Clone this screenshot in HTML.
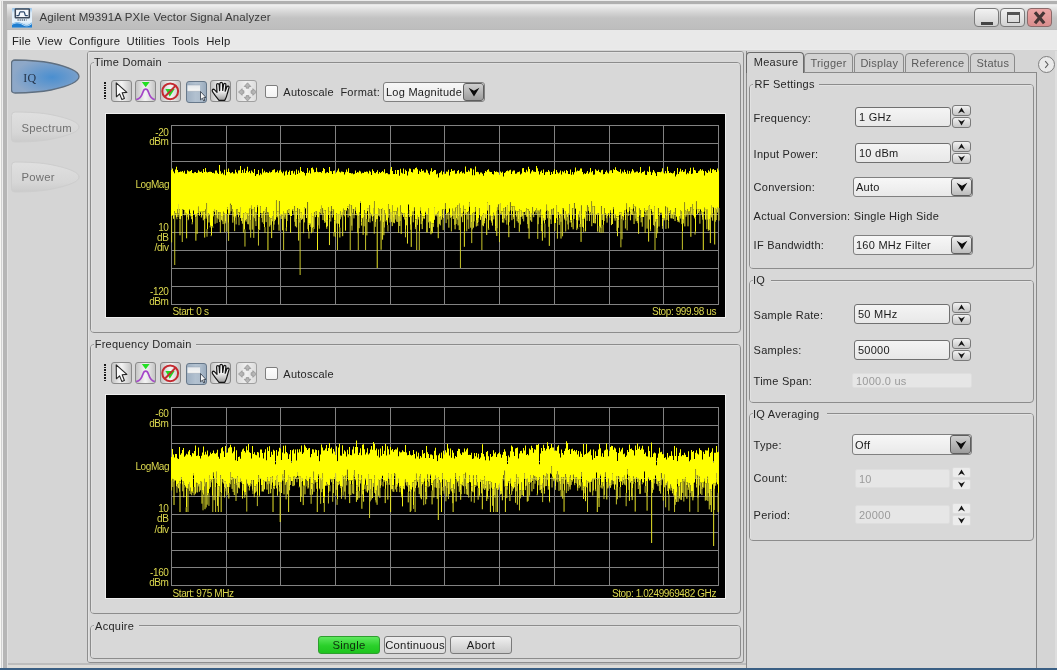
<!DOCTYPE html>
<html><head><meta charset="utf-8"><style>
html,body{margin:0;padding:0;width:1057px;height:670px;overflow:hidden;background:#d5d5d5}
body{position:relative;font-family:'Liberation Sans',sans-serif;}
div{font-family:'Liberation Sans',sans-serif}
</style></head><body><div style="position:absolute;left:0;top:0;width:1057px;height:670px;will-change:transform">
<div style="position:absolute;left:0px;top:0px;width:1057px;height:670px;box-sizing:border-box;background:#d5d5d5"></div>
<div style="position:absolute;left:0px;top:0px;width:1px;height:670px;box-sizing:border-box;background:#f6f6f3"></div>
<div style="position:absolute;left:1px;top:0px;width:1px;height:670px;box-sizing:border-box;background:#d0d0d0"></div>
<div style="position:absolute;left:2px;top:0px;width:1px;height:670px;box-sizing:border-box;background:#efefef"></div>
<div style="position:absolute;left:3px;top:0px;width:4px;height:670px;box-sizing:border-box;background:#b6b6b6"></div>
<div style="position:absolute;left:7px;top:0px;width:1px;height:670px;box-sizing:border-box;background:#e0e0e0"></div>
<div style="position:absolute;left:0px;top:0px;width:1057px;height:1px;box-sizing:border-box;background:#ececec"></div>
<div style="position:absolute;left:3px;top:1px;width:1054px;height:3px;box-sizing:border-box;background:#b0b0b0"></div>
<div style="position:absolute;left:7px;top:4px;width:1050px;height:1px;box-sizing:border-box;background:#e6e6e6"></div>
<div style="position:absolute;left:7px;top:5px;width:1050px;height:25px;box-sizing:border-box;background:linear-gradient(#f0f0f0 0px,#d6d6d6 7px,#c3c3c3 13px,#bdbdbd 24px,#b6b6b6 25px)"></div>
<svg style="position:absolute;left:11.5px;top:7.5px" width="20" height="20" viewBox="0 0 20 20">
<defs><linearGradient id="ig" x1="0" y1="0" x2="0" y2="1"><stop offset="0" stop-color="#8fc0ea"/><stop offset="0.25" stop-color="#dcecf8"/><stop offset="0.7" stop-color="#e6f2fb"/><stop offset="1" stop-color="#9ccbef"/></linearGradient></defs>
<rect x="0" y="0" width="20" height="19.5" rx="1" fill="url(#ig)"/>
<rect x="3.3" y="1" width="14" height="8.8" rx="0.6" fill="#f4f8fc" stroke="#3c4858" stroke-width="1.5"/>
<path d="M4.4 7.7 H6.6 C7.4 7.7 7.3 3.8 8.2 3.8 H12 C12.9 3.8 12.8 7.7 13.6 7.7 H15.8" fill="none" stroke="#2e4a6c" stroke-width="1.3"/>
<path d="M5.5 12 H14.5" stroke="#5a6878" stroke-width="1.4" stroke-dasharray="1.2 0.9"/>
<path d="M0 15.8 C4 13.4 7.5 13.8 11 16 C14 18 17 17.3 20 14.6 V19.5 H0 Z" fill="#1f7ed0"/>
<path d="M0 16.4 C4 14.1 7.5 14.5 11 16.7 C14 18.6 17 18 20 15.4" fill="none" stroke="#d6ecfb" stroke-width="0.9"/>
</svg>
<div style="position:absolute;left:39.50px;top:12.37px;font-size:11.5px;line-height:11.5px;color:#3a3a3a;white-space:nowrap;letter-spacing:0.1px;">Agilent M9391A PXIe Vector Signal Analyzer</div>
<div style="position:absolute;left:974px;top:8px;width:25px;height:19px;box-sizing:border-box;border:1px solid #7a7a7a;border-radius:4px;background:linear-gradient(#f2f2f2,#d2d2d2);overflow:hidden"><div style="position:absolute;left:6px;top:13px;width:12px;height:3px;background:#454545"></div></div>
<div style="position:absolute;left:1000px;top:8px;width:25px;height:19px;box-sizing:border-box;border:1px solid #7a7a7a;border-radius:4px;background:linear-gradient(#f2f2f2,#d2d2d2);overflow:hidden"><div style="position:absolute;left:6px;top:3px;width:13px;height:11px;box-sizing:border-box;border:1px solid #555;border-top:3px solid #555"></div></div>
<div style="position:absolute;left:1027px;top:8px;width:25px;height:19px;box-sizing:border-box;border:1px solid #8a6a6a;border-radius:4px;background:linear-gradient(#eca6a6,#d98d8d);overflow:hidden"><svg width="23" height="17" style="position:absolute;left:0;top:0"><path d="M7 3.2 L16.2 14.2 M16.2 3.2 L7 14.2" stroke="#463636" stroke-width="3.2"/></svg></div>
<div style="position:absolute;left:8px;top:30px;width:1049px;height:20px;box-sizing:border-box;background:#e9e9e9"></div>
<div style="position:absolute;left:8px;top:49px;width:1049px;height:1px;box-sizing:border-box;background:#ebebeb"></div>
<div style="position:absolute;left:11.90px;top:35.53px;font-size:11.3px;line-height:11.3px;color:#222;white-space:nowrap;letter-spacing:0.25px;">File</div>
<div style="position:absolute;left:37.10px;top:35.53px;font-size:11.3px;line-height:11.3px;color:#222;white-space:nowrap;letter-spacing:0.25px;">View</div>
<div style="position:absolute;left:69.00px;top:35.53px;font-size:11.3px;line-height:11.3px;color:#222;white-space:nowrap;letter-spacing:0.25px;">Configure</div>
<div style="position:absolute;left:126.50px;top:35.53px;font-size:11.3px;line-height:11.3px;color:#222;white-space:nowrap;letter-spacing:0.25px;">Utilities</div>
<div style="position:absolute;left:171.90px;top:35.53px;font-size:11.3px;line-height:11.3px;color:#222;white-space:nowrap;letter-spacing:0.25px;">Tools</div>
<div style="position:absolute;left:206.20px;top:35.53px;font-size:11.3px;line-height:11.3px;color:#222;white-space:nowrap;letter-spacing:0.25px;">Help</div>
<svg style="position:absolute;left:10.5px;top:59px" width="70" height="36" viewBox="0 0 70 36">
<defs><radialGradient id="iqg" cx="0.58" cy="0.52" r="0.62" gradientTransform="translate(0.29 0.26) scale(0.5 0.5) translate(-0.29 -0.26)"><stop offset="0" stop-color="#3d8bd2"/><stop offset="1" stop-color="#8cabd0"/></radialGradient>
<radialGradient id="iqg2" cx="0.6" cy="0.52" r="0.58"><stop offset="0" stop-color="#4a8fd0"/><stop offset="0.55" stop-color="#6f9ccc"/><stop offset="1" stop-color="#8ea8c8"/></radialGradient></defs>
<path d="M4 1 C20 1.20 30 2.00 40 4.00 C56 7.50 68 12.00 68 17.50 C68 23.00 56 27.50 40 31.00 C30 33.00 20 33.80 4 34.00 Q0.5 34.00 0.5 30.50 V4.5 Q0.5 1 4 1 Z" fill="url(#iqg2)" stroke="#5f6f80" stroke-width="1.3"/></svg>
<div style="position:absolute;left:23.20px;top:72.04px;font-size:12px;line-height:12px;color:#24344a;white-space:nowrap;letter-spacing:0.25px;font-family:'Liberation Serif',serif;">IQ</div>
<svg style="position:absolute;left:10.5px;top:111px" width="70" height="33" viewBox="0 0 70 33">
<defs><linearGradient id="sg111" x1="0" y1="0" x2="0" y2="1"><stop offset="0" stop-color="#e0e0e0"/><stop offset="0.7" stop-color="#d6d6d6"/><stop offset="1" stop-color="#cbcbcb"/></linearGradient></defs>
<path d="M4 1 C20 1.09 30 1.82 40 3.65 C56 6.84 68 10.94 68 15.96 C68 20.97 56 25.07 40 28.26 C30 30.09 20 30.82 4 31.00 Q0.5 31.00 0.5 27.81 V4.5 Q0.5 1 4 1 Z" fill="url(#sg111)" stroke="#cdcdcd" stroke-width="1"/></svg>
<svg style="position:absolute;left:10.5px;top:160.5px" width="70" height="33" viewBox="0 0 70 33">
<defs><linearGradient id="sg160" x1="0" y1="0" x2="0" y2="1"><stop offset="0" stop-color="#e0e0e0"/><stop offset="0.7" stop-color="#d6d6d6"/><stop offset="1" stop-color="#cbcbcb"/></linearGradient></defs>
<path d="M4 1 C20 1.09 30 1.82 40 3.65 C56 6.84 68 10.94 68 15.96 C68 20.97 56 25.07 40 28.26 C30 30.09 20 30.82 4 31.00 Q0.5 31.00 0.5 27.81 V4.5 Q0.5 1 4 1 Z" fill="url(#sg160)" stroke="#cdcdcd" stroke-width="1"/></svg>
<div style="position:absolute;left:21.50px;top:122.83px;font-size:11.3px;line-height:11.3px;color:#707070;white-space:nowrap;letter-spacing:0.25px;">Spectrum</div>
<div style="position:absolute;left:21.50px;top:171.83px;font-size:11.3px;line-height:11.3px;color:#707070;white-space:nowrap;letter-spacing:0.25px;">Power</div>
<div style="position:absolute;left:87px;top:51px;width:657px;height:612px;box-sizing:border-box;border:1px solid #8e8e8e;border-radius:3px;background:#d8d8d8"></div>
<div style="position:absolute;left:88px;top:52px;width:655px;height:610px;box-sizing:border-box;border-left:1px solid #e2e2e2;border-top:1px solid #e2e2e2;border-radius:2px"></div>
<div style="position:absolute;left:90px;top:62px;width:651px;height:271px;box-sizing:border-box;border:1px solid #8c8c8c;border-radius:4px;"></div><div style="position:absolute;left:91px;top:63px;width:649px;height:269px;box-sizing:border-box;border:1px solid #e0e0e0;border-right:none;border-bottom:none;border-radius:3px;"></div><div style="position:absolute;left:94px;top:60px;width:74px;height:5px;background:#d8d8d8"></div><div style="position:absolute;left:94.10px;top:57.09px;font-size:11px;line-height:11px;color:#262626;white-space:nowrap;letter-spacing:0.25px;">Time Domain</div>
<div style="position:absolute;left:90px;top:344px;width:651px;height:270px;box-sizing:border-box;border:1px solid #8c8c8c;border-radius:4px;"></div><div style="position:absolute;left:91px;top:345px;width:649px;height:268px;box-sizing:border-box;border:1px solid #e0e0e0;border-right:none;border-bottom:none;border-radius:3px;"></div><div style="position:absolute;left:94px;top:342px;width:102px;height:5px;background:#d8d8d8"></div><div style="position:absolute;left:94.70px;top:338.79px;font-size:11px;line-height:11px;color:#262626;white-space:nowrap;letter-spacing:0.25px;">Frequency Domain</div>
<div style="position:absolute;left:90px;top:625px;width:651px;height:34px;box-sizing:border-box;border:1px solid #8c8c8c;border-radius:4px;"></div><div style="position:absolute;left:91px;top:626px;width:649px;height:32px;box-sizing:border-box;border:1px solid #e0e0e0;border-right:none;border-bottom:none;border-radius:3px;"></div><div style="position:absolute;left:94px;top:623px;width:45px;height:5px;background:#d8d8d8"></div><div style="position:absolute;left:95.10px;top:620.69px;font-size:11px;line-height:11px;color:#262626;white-space:nowrap;letter-spacing:0.25px;">Acquire</div>
<div style="position:absolute;left:103.5px;top:82.0px;width:2px;height:1.6px;box-sizing:border-box;background:#1a1a1a"></div><div style="position:absolute;left:103.5px;top:84.6px;width:2px;height:1.6px;box-sizing:border-box;background:#1a1a1a"></div><div style="position:absolute;left:103.5px;top:87.2px;width:2px;height:1.6px;box-sizing:border-box;background:#1a1a1a"></div><div style="position:absolute;left:103.5px;top:89.8px;width:2px;height:1.6px;box-sizing:border-box;background:#1a1a1a"></div><div style="position:absolute;left:103.5px;top:92.4px;width:2px;height:1.6px;box-sizing:border-box;background:#1a1a1a"></div><div style="position:absolute;left:103.5px;top:95.0px;width:2px;height:1.6px;box-sizing:border-box;background:#1a1a1a"></div><div style="position:absolute;left:103.5px;top:97.6px;width:2px;height:1.6px;box-sizing:border-box;background:#1a1a1a"></div><div style="position:absolute;left:111px;top:80px;width:21px;height:22px;box-sizing:border-box;border:1px solid #8a8a8a;border-radius:3px;background:linear-gradient(90deg,#c4c4c4,#f4f4f4 48%,#f0f0f0 55%,#c4c4c4);overflow:hidden"><svg width="21" height="22" style="position:absolute;left:-1px;top:-1px"><path d="M5.2 2.8 L5.4 16.8 L8.6 13.9 L10.9 19.6 L13.4 18.5 L11.2 12.8 L15.9 12.4 Z" fill="#fafafa" stroke="#262626" stroke-width="1.1" stroke-linejoin="round"/></svg></div><div style="position:absolute;left:135px;top:80px;width:21px;height:22px;box-sizing:border-box;border:1px solid #8a8a8a;border-radius:3px;background:linear-gradient(90deg,#c4c4c4,#f4f4f4 48%,#f0f0f0 55%,#c4c4c4);overflow:hidden"><svg width="21" height="22" style="position:absolute;left:-1px;top:-1px"><path d="M6.8 2 H14.6 L10.7 7.2 Z" fill="#22e022"/><path d="M1 19.5 C5 19.5 6.5 16.5 8 12 C9.2 8.2 12.2 8.2 13.4 12 C14.9 16.5 16.4 19.5 20 19.5" fill="none" stroke="#a444c8" stroke-width="1.7"/></svg></div><div style="position:absolute;left:160px;top:80px;width:21px;height:22px;box-sizing:border-box;border:1px solid #8a8a8a;border-radius:3px;background:linear-gradient(90deg,#c4c4c4,#f4f4f4 48%,#f0f0f0 55%,#c4c4c4);overflow:hidden"><svg width="21" height="22" style="position:absolute;left:-1px;top:-1px"><path d="M5.4 9 H14.6 L9.8 16.8 Z" fill="#22d822"/><circle cx="10.2" cy="11.3" r="7.9" fill="none" stroke="#c42a30" stroke-width="2"/><path d="M4.6 17 L15.9 5.4" stroke="#c42a30" stroke-width="1.9"/></svg></div><div style="position:absolute;left:186px;top:81px;width:21px;height:22px;box-sizing:border-box;border:1px solid #67788a;border-radius:3px;background:linear-gradient(90deg,#9fb0c2,#b2c1d0 45%,#aebdcc 70%,#9aabbd);overflow:hidden"><svg width="21" height="22" style="position:absolute;left:0;top:0"><defs><linearGradient id="zg" x1="0" y1="0" x2="0" y2="1"><stop offset="0" stop-color="#e4e8ec"/><stop offset="1" stop-color="#f6f6f4"/></linearGradient></defs><rect x="0.5" y="3" width="12.5" height="6.3" fill="url(#zg)"/><path d="M0.5 3 H13 M0.5 9.3 H13" stroke="#8a98a8" stroke-width="0.8" stroke-dasharray="1 1"/><path d="M13.5 9.5 L13.5 17.8 L15.4 16.2 L16.7 18.9 L17.9 18.3 L16.7 15.6 L19 15.5 Z" fill="#f4f4f4" stroke="#2a3440" stroke-width="0.8"/></svg></div><div style="position:absolute;left:210px;top:80px;width:21px;height:22px;box-sizing:border-box;border:1px solid #8a8a8a;border-radius:3px;background:linear-gradient(90deg,#c4c4c4,#f4f4f4 48%,#f0f0f0 55%,#c4c4c4);overflow:hidden"><svg width="21" height="22" style="position:absolute;left:-1px;top:-1px"><defs><linearGradient id="hg" x1="0" y1="0" x2="0" y2="1"><stop offset="0" stop-color="#fff"/><stop offset="0.5" stop-color="#f0f0f0"/><stop offset="1" stop-color="#9c9c9c"/></linearGradient></defs><path d="M9 20.3 C7 18 4.5 15 2.6 11.8 C1.6 10.2 2.8 8.6 4.4 9.6 L7 12.4 L6.6 5 C6.6 3 9 3 9.2 5 L9.6 10.6 L9.9 3.6 C10 1.8 12.4 1.8 12.5 3.6 L12.7 10.4 L13.6 4.6 C13.9 2.9 16.1 3.1 15.9 4.9 L15.2 11.2 L16.8 7 C17.4 5.6 19.4 6 19 7.6 L17.2 14 C16.6 17 15.6 18.8 14.8 20.3 Z" fill="url(#hg)" stroke="#161616" stroke-width="1.25" stroke-linejoin="round"/></svg></div><div style="position:absolute;left:236px;top:80px;width:21px;height:22px;box-sizing:border-box;border:1px solid #a0a0a0;border-radius:3px;background:linear-gradient(90deg,#dcdcdc,#f0f0f0 50%,#dcdcdc);overflow:hidden"><svg width="21" height="22" style="position:absolute;left:0;top:0"><g fill="#b6b6b6" stroke="#8e8e8e" stroke-width="0.7"><path d="M10.5 1.8 L13.8 5.5 H11.8 V7.2 H9.2 V5.5 H7.2 Z"/><path d="M10.5 20 L13.8 16.3 H11.8 V14.6 H9.2 V16.3 H7.2 Z"/><path d="M1.5 11 L5.2 7.7 V9.7 H6.9 V12.3 H5.2 V14.3 Z"/><path d="M19.5 11 L15.8 7.7 V9.7 H14.1 V12.3 H15.8 V14.3 Z"/></g></svg></div><div style="position:absolute;left:265px;top:85px;width:13px;height:13px;box-sizing:border-box;border:1px solid #7e7e7e;border-radius:2px;background:linear-gradient(#fdfdfd,#f2f2f2)"></div><div style="position:absolute;left:283.30px;top:87.39px;font-size:11px;line-height:11px;color:#262626;white-space:nowrap;letter-spacing:0.25px;">Autoscale</div><div style="position:absolute;left:340.40px;top:87.39px;font-size:11px;line-height:11px;color:#262626;white-space:nowrap;letter-spacing:0.25px;">Format:</div><div style="position:absolute;left:383px;top:82px;width:102px;height:20px;box-sizing:border-box;border:1px solid #808080;border-radius:3px;background:linear-gradient(#f7f7f7,#e9e9e9);overflow:hidden"><div style="position:absolute;right:0;top:0;width:21px;height:18px;box-sizing:border-box;border:1px solid #5e5e5e;border-radius:3px;background:linear-gradient(#cfcfcf,#9c9c9c);display:flex;align-items:center;justify-content:center"><svg width="12" height="10" viewBox="0 0 12 10" style="flex:none"><path d="M0.6 0.8 L6 9.6 L11.4 0.8 L6 3.8 Z" fill="#0c0c0c"/></svg></div></div><div style="position:absolute;left:386.00px;top:87.39px;font-size:11px;line-height:11px;color:#1a1a1a;white-space:nowrap;letter-spacing:0.25px;">Log Magnitude</div>
<div style="position:absolute;left:103.5px;top:364.0px;width:2px;height:1.6px;box-sizing:border-box;background:#1a1a1a"></div><div style="position:absolute;left:103.5px;top:366.6px;width:2px;height:1.6px;box-sizing:border-box;background:#1a1a1a"></div><div style="position:absolute;left:103.5px;top:369.2px;width:2px;height:1.6px;box-sizing:border-box;background:#1a1a1a"></div><div style="position:absolute;left:103.5px;top:371.8px;width:2px;height:1.6px;box-sizing:border-box;background:#1a1a1a"></div><div style="position:absolute;left:103.5px;top:374.4px;width:2px;height:1.6px;box-sizing:border-box;background:#1a1a1a"></div><div style="position:absolute;left:103.5px;top:377.0px;width:2px;height:1.6px;box-sizing:border-box;background:#1a1a1a"></div><div style="position:absolute;left:103.5px;top:379.6px;width:2px;height:1.6px;box-sizing:border-box;background:#1a1a1a"></div><div style="position:absolute;left:111px;top:362px;width:21px;height:22px;box-sizing:border-box;border:1px solid #8a8a8a;border-radius:3px;background:linear-gradient(90deg,#c4c4c4,#f4f4f4 48%,#f0f0f0 55%,#c4c4c4);overflow:hidden"><svg width="21" height="22" style="position:absolute;left:-1px;top:-1px"><path d="M5.2 2.8 L5.4 16.8 L8.6 13.9 L10.9 19.6 L13.4 18.5 L11.2 12.8 L15.9 12.4 Z" fill="#fafafa" stroke="#262626" stroke-width="1.1" stroke-linejoin="round"/></svg></div><div style="position:absolute;left:135px;top:362px;width:21px;height:22px;box-sizing:border-box;border:1px solid #8a8a8a;border-radius:3px;background:linear-gradient(90deg,#c4c4c4,#f4f4f4 48%,#f0f0f0 55%,#c4c4c4);overflow:hidden"><svg width="21" height="22" style="position:absolute;left:-1px;top:-1px"><path d="M6.8 2 H14.6 L10.7 7.2 Z" fill="#22e022"/><path d="M1 19.5 C5 19.5 6.5 16.5 8 12 C9.2 8.2 12.2 8.2 13.4 12 C14.9 16.5 16.4 19.5 20 19.5" fill="none" stroke="#a444c8" stroke-width="1.7"/></svg></div><div style="position:absolute;left:160px;top:362px;width:21px;height:22px;box-sizing:border-box;border:1px solid #8a8a8a;border-radius:3px;background:linear-gradient(90deg,#c4c4c4,#f4f4f4 48%,#f0f0f0 55%,#c4c4c4);overflow:hidden"><svg width="21" height="22" style="position:absolute;left:-1px;top:-1px"><path d="M5.4 9 H14.6 L9.8 16.8 Z" fill="#22d822"/><circle cx="10.2" cy="11.3" r="7.9" fill="none" stroke="#c42a30" stroke-width="2"/><path d="M4.6 17 L15.9 5.4" stroke="#c42a30" stroke-width="1.9"/></svg></div><div style="position:absolute;left:186px;top:363px;width:21px;height:22px;box-sizing:border-box;border:1px solid #67788a;border-radius:3px;background:linear-gradient(90deg,#9fb0c2,#b2c1d0 45%,#aebdcc 70%,#9aabbd);overflow:hidden"><svg width="21" height="22" style="position:absolute;left:0;top:0"><defs><linearGradient id="zg" x1="0" y1="0" x2="0" y2="1"><stop offset="0" stop-color="#e4e8ec"/><stop offset="1" stop-color="#f6f6f4"/></linearGradient></defs><rect x="0.5" y="3" width="12.5" height="6.3" fill="url(#zg)"/><path d="M0.5 3 H13 M0.5 9.3 H13" stroke="#8a98a8" stroke-width="0.8" stroke-dasharray="1 1"/><path d="M13.5 9.5 L13.5 17.8 L15.4 16.2 L16.7 18.9 L17.9 18.3 L16.7 15.6 L19 15.5 Z" fill="#f4f4f4" stroke="#2a3440" stroke-width="0.8"/></svg></div><div style="position:absolute;left:210px;top:362px;width:21px;height:22px;box-sizing:border-box;border:1px solid #8a8a8a;border-radius:3px;background:linear-gradient(90deg,#c4c4c4,#f4f4f4 48%,#f0f0f0 55%,#c4c4c4);overflow:hidden"><svg width="21" height="22" style="position:absolute;left:-1px;top:-1px"><defs><linearGradient id="hg" x1="0" y1="0" x2="0" y2="1"><stop offset="0" stop-color="#fff"/><stop offset="0.5" stop-color="#f0f0f0"/><stop offset="1" stop-color="#9c9c9c"/></linearGradient></defs><path d="M9 20.3 C7 18 4.5 15 2.6 11.8 C1.6 10.2 2.8 8.6 4.4 9.6 L7 12.4 L6.6 5 C6.6 3 9 3 9.2 5 L9.6 10.6 L9.9 3.6 C10 1.8 12.4 1.8 12.5 3.6 L12.7 10.4 L13.6 4.6 C13.9 2.9 16.1 3.1 15.9 4.9 L15.2 11.2 L16.8 7 C17.4 5.6 19.4 6 19 7.6 L17.2 14 C16.6 17 15.6 18.8 14.8 20.3 Z" fill="url(#hg)" stroke="#161616" stroke-width="1.25" stroke-linejoin="round"/></svg></div><div style="position:absolute;left:236px;top:362px;width:21px;height:22px;box-sizing:border-box;border:1px solid #a0a0a0;border-radius:3px;background:linear-gradient(90deg,#dcdcdc,#f0f0f0 50%,#dcdcdc);overflow:hidden"><svg width="21" height="22" style="position:absolute;left:0;top:0"><g fill="#b6b6b6" stroke="#8e8e8e" stroke-width="0.7"><path d="M10.5 1.8 L13.8 5.5 H11.8 V7.2 H9.2 V5.5 H7.2 Z"/><path d="M10.5 20 L13.8 16.3 H11.8 V14.6 H9.2 V16.3 H7.2 Z"/><path d="M1.5 11 L5.2 7.7 V9.7 H6.9 V12.3 H5.2 V14.3 Z"/><path d="M19.5 11 L15.8 7.7 V9.7 H14.1 V12.3 H15.8 V14.3 Z"/></g></svg></div><div style="position:absolute;left:265px;top:367px;width:13px;height:13px;box-sizing:border-box;border:1px solid #7e7e7e;border-radius:2px;background:linear-gradient(#fdfdfd,#f2f2f2)"></div><div style="position:absolute;left:283.30px;top:369.39px;font-size:11px;line-height:11px;color:#262626;white-space:nowrap;letter-spacing:0.25px;">Autoscale</div>
<div style="position:absolute;left:105px;top:113px;width:621px;height:205px;background:#eeeeee"></div><svg style="position:absolute;left:106px;top:114px" width="619" height="203" viewBox="106 114 619 203"><rect x="106" y="114" width="619" height="203" fill="#000"/><path d="M171.5 125 V305 M171 125.5 H719 M226.5 125 V305 M171 143.5 H719 M280.5 125 V305 M171 161.5 H719 M335.5 125 V305 M171 179.5 H719 M390.5 125 V305 M171 197.5 H719 M444.5 125 V305 M171 214.5 H719 M499.5 125 V305 M171 232.5 H719 M554.5 125 V305 M171 250.5 H719 M609.5 125 V305 M171 268.5 H719 M663.5 125 V305 M171 286.5 H719 M718.5 125 V305 M171 304.5 H719" stroke="#828282" stroke-width="1" fill="none"/><path d="M171.5 170.0V216.6M172.5 168.5V215.2M173.5 171.5V215.2M174.5 173.3V211.6M175.5 169.6V213.3M176.5 166.8V213.3M177.5 170.0V209.0M178.5 172.3V203.9M179.5 172.0V209.6M180.5 171.5V215.9M181.5 171.7V215.9M182.5 170.9V209.3M183.5 172.5V209.8M184.5 170.7V210.1M185.5 173.8V212.7M186.5 173.7V213.2M187.5 170.3V214.6M188.5 171.2V214.6M189.5 171.4V209.5M190.5 171.1V213.2M191.5 170.0V216.2M192.5 173.0V216.2M193.5 173.3V209.9M194.5 172.3V214.2M195.5 172.1V214.5M196.5 172.9V214.5M197.5 172.8V213.3M198.5 170.2V206.8M199.5 171.4V211.7M200.5 171.9V211.7M201.5 171.5V211.7M202.5 173.1V211.7M203.5 169.0V211.6M204.5 171.9V211.6M205.5 167.9V209.4M206.5 171.8V202.9M207.5 172.6V212.9M208.5 171.9V212.9M209.5 171.8V214.6M210.5 171.7V225.7M211.5 172.0V226.5M212.5 172.9V226.5M213.5 172.7V211.6M214.5 173.4V208.9M215.5 170.4V210.0M216.5 170.6V210.0M217.5 172.7V211.9M218.5 174.0V211.9M219.5 165.1V212.2M220.5 171.2V212.4M221.5 173.7V216.8M222.5 172.7V216.8M223.5 174.5V211.8M224.5 169.8V213.0M225.5 175.2V214.0M226.5 169.6V214.0M227.5 171.9V207.3M228.5 168.5V213.4M229.5 172.0V213.4M230.5 173.2V203.8M231.5 172.7V205.0M232.5 172.0V209.2M233.5 173.5V211.9M234.5 173.4V216.0M235.5 169.8V216.0M236.5 172.2V209.6M237.5 173.5V209.3M238.5 170.6V212.6M239.5 170.3V212.6M240.5 166.1V207.0M241.5 173.0V217.9M242.5 169.9V217.9M243.5 172.7V213.1M244.5 168.8V213.1M245.5 173.0V212.3M246.5 170.8V213.8M247.5 166.8V213.8M248.5 172.2V213.8M249.5 170.9V208.8M250.5 173.2V208.8M251.5 170.5V205.8M252.5 171.8V209.4M253.5 172.9V209.4M254.5 169.1V207.6M255.5 175.9V212.5M256.5 174.2V212.5M257.5 173.9V205.0M258.5 169.9V217.1M259.5 175.3V217.1M260.5 173.2V206.3M261.5 174.4V213.6M262.5 168.8V213.6M263.5 172.6V211.5M264.5 170.7V211.5M265.5 172.4V209.2M266.5 171.9V207.3M267.5 172.5V212.0M268.5 173.1V212.3M269.5 171.6V217.1M270.5 172.5V218.6M271.5 171.9V218.6M272.5 170.2V216.0M273.5 169.7V211.1M274.5 169.3V219.1M275.5 172.5V219.1M276.5 172.0V200.6M277.5 170.6V211.3M278.5 172.8V211.3M279.5 170.4V200.9M280.5 169.7V213.9M281.5 171.7V213.9M282.5 173.2V213.9M283.5 171.5V211.8M284.5 175.6V213.7M285.5 171.4V213.7M286.5 170.5V213.7M287.5 174.8V210.2M288.5 172.0V209.5M289.5 170.6V209.4M290.5 175.1V215.9M291.5 171.1V215.9M292.5 170.7V209.1M293.5 173.4V209.1M294.5 171.3V206.1M295.5 174.8V211.5M296.5 169.5V211.5M297.5 174.1V208.0M298.5 170.5V209.0M299.5 172.8V209.0M300.5 166.9V212.5M301.5 170.9V212.5M302.5 172.1V214.9M303.5 171.7V214.9M304.5 173.1V207.2M305.5 175.4V208.0M306.5 173.1V208.0M307.5 168.0V202.0M308.5 172.7V223.4M309.5 170.5V223.4M310.5 173.4V223.4M311.5 168.0V213.7M312.5 167.5V216.8M313.5 169.6V216.8M314.5 172.2V212.2M315.5 172.0V211.2M316.5 167.8V211.2M317.5 171.8V217.4M318.5 172.2V217.4M319.5 171.9V211.9M320.5 172.1V209.1M321.5 172.8V205.7M322.5 170.9V208.3M323.5 167.9V209.9M324.5 169.0V210.3M325.5 173.3V210.3M326.5 172.6V220.1M327.5 172.0V220.1M328.5 173.0V207.5M329.5 167.1V211.7M330.5 171.1V211.7M331.5 171.3V206.0M332.5 173.9V209.4M333.5 170.9V209.4M334.5 170.6V220.6M335.5 173.5V220.6M336.5 172.3V213.3M337.5 170.4V214.5M338.5 168.5V214.5M339.5 171.8V214.5M340.5 172.4V210.9M341.5 171.6V211.9M342.5 171.7V211.9M343.5 172.1V208.8M344.5 174.5V210.0M345.5 172.3V210.3M346.5 169.4V210.3M347.5 171.7V206.8M348.5 168.2V206.8M349.5 172.9V204.6M350.5 173.0V205.2M351.5 173.4V205.2M352.5 173.3V209.1M353.5 174.3V209.1M354.5 173.8V209.1M355.5 170.5V207.4M356.5 172.9V213.1M357.5 172.1V214.9M358.5 172.5V214.9M359.5 170.7V212.6M360.5 171.6V201.1M361.5 173.6V218.2M362.5 172.8V218.2M363.5 173.1V216.9M364.5 171.8V210.1M365.5 172.1V213.5M366.5 171.6V213.5M367.5 171.8V208.2M368.5 173.4V208.2M369.5 170.7V205.0M370.5 171.7V212.7M371.5 174.9V214.0M372.5 169.2V214.0M373.5 170.9V207.9M374.5 172.7V201.6M375.5 173.2V214.3M376.5 171.9V214.3M377.5 170.3V214.3M378.5 173.7V208.5M379.5 171.9V209.0M380.5 173.1V209.1M381.5 172.1V209.1M382.5 171.0V208.4M383.5 172.2V209.9M384.5 169.3V209.9M385.5 173.4V213.8M386.5 173.1V219.9M387.5 173.3V219.9M388.5 174.3V204.6M389.5 174.2V209.0M390.5 169.4V212.0M391.5 166.9V212.0M392.5 171.1V205.4M393.5 174.0V211.3M394.5 174.1V211.3M395.5 170.0V211.3M396.5 173.9V211.0M397.5 170.1V207.7M398.5 170.0V216.8M399.5 175.8V216.8M400.5 168.7V205.5M401.5 172.8V211.9M402.5 173.5V213.3M403.5 168.5V213.3M404.5 174.0V212.9M405.5 169.7V217.3M406.5 171.1V217.3M407.5 175.5V213.7M408.5 171.6V204.2M409.5 168.4V210.4M410.5 168.7V216.7M411.5 171.9V216.7M412.5 172.5V211.7M413.5 169.2V211.7M414.5 169.6V207.6M415.5 168.0V219.6M416.5 167.4V219.6M417.5 169.3V215.8M418.5 174.1V217.0M419.5 170.7V217.0M420.5 172.1V207.8M421.5 168.9V213.5M422.5 171.1V216.6M423.5 170.5V216.6M424.5 172.6V216.6M425.5 172.4V211.1M426.5 169.5V214.5M427.5 170.6V214.5M428.5 173.2V208.4M429.5 174.8V221.0M430.5 171.3V221.8M431.5 168.2V223.5M432.5 172.1V223.5M433.5 170.9V223.5M434.5 170.1V207.2M435.5 170.1V214.0M436.5 174.3V214.0M437.5 173.6V212.8M438.5 177.5V211.5M439.5 173.1V215.9M440.5 172.2V215.9M441.5 170.8V215.9M442.5 174.4V209.6M443.5 171.7V209.6M444.5 173.8V209.0M445.5 173.8V203.2M446.5 171.5V213.0M447.5 171.8V213.0M448.5 169.8V212.1M449.5 175.5V208.6M450.5 172.1V215.0M451.5 169.1V215.0M452.5 170.9V208.8M453.5 170.8V211.0M454.5 170.3V211.0M455.5 173.8V207.8M456.5 173.6V207.8M457.5 171.0V205.2M458.5 169.9V205.2M459.5 173.5V203.7M460.5 171.9V208.2M461.5 171.2V213.2M462.5 173.3V213.2M463.5 172.5V205.8M464.5 173.7V209.6M465.5 166.4V209.6M466.5 171.7V212.1M467.5 171.9V212.1M468.5 170.3V211.1M469.5 171.6V202.6M470.5 168.3V215.1M471.5 168.5V215.1M472.5 175.3V213.5M473.5 169.4V212.6M474.5 175.2V212.6M475.5 166.6V207.1M476.5 172.0V220.7M477.5 171.8V220.7M478.5 172.2V218.0M479.5 174.2V208.2M480.5 172.5V216.7M481.5 172.4V216.7M482.5 173.8V215.5M483.5 175.8V213.6M484.5 173.0V213.9M485.5 170.9V213.9M486.5 171.7V213.9M487.5 169.9V202.5M488.5 169.3V205.0M489.5 171.5V205.0M490.5 172.0V215.1M491.5 172.1V216.1M492.5 174.0V216.1M493.5 174.5V212.7M494.5 171.1V214.9M495.5 172.1V214.9M496.5 171.6V211.4M497.5 172.0V207.2M498.5 172.5V204.4M499.5 174.8V204.4M500.5 171.6V203.0M501.5 172.7V211.6M502.5 171.8V211.6M503.5 176.5V208.2M504.5 173.1V208.2M505.5 172.2V207.0M506.5 171.0V207.0M507.5 170.6V205.1M508.5 171.2V211.7M509.5 170.2V211.7M510.5 169.7V202.2M511.5 174.1V206.6M512.5 171.5V206.6M513.5 170.5V206.6M514.5 170.4V206.4M515.5 173.7V210.6M516.5 173.4V211.5M517.5 172.2V211.5M518.5 171.9V211.5M519.5 171.5V209.3M520.5 174.6V210.7M521.5 173.5V210.7M522.5 168.3V212.1M523.5 168.1V212.1M524.5 171.9V212.1M525.5 172.4V211.8M526.5 169.7V208.5M527.5 171.6V209.6M528.5 166.8V209.6M529.5 169.0V211.3M530.5 173.4V212.9M531.5 171.5V212.9M532.5 170.0V206.9M533.5 171.6V211.4M534.5 171.7V211.4M535.5 172.1V210.6M536.5 165.9V208.4M537.5 168.2V210.7M538.5 171.3V210.7M539.5 174.6V210.7M540.5 171.8V209.4M541.5 170.6V215.3M542.5 172.9V215.3M543.5 169.4V218.0M544.5 174.9V218.0M545.5 172.2V212.4M546.5 171.8V204.7M547.5 172.0V209.9M548.5 170.1V211.2M549.5 171.5V215.1M550.5 174.9V215.1M551.5 172.0V209.6M552.5 173.9V209.6M553.5 171.2V208.6M554.5 169.3V222.9M555.5 174.1V222.9M556.5 170.0V205.4M557.5 172.3V212.3M558.5 173.5V212.3M559.5 172.5V214.3M560.5 170.4V214.3M561.5 174.4V214.3M562.5 171.2V208.6M563.5 172.2V208.3M564.5 170.8V210.9M565.5 173.3V210.9M566.5 170.1V214.0M567.5 171.0V214.0M568.5 174.1V213.8M569.5 173.9V204.2M570.5 169.6V220.3M571.5 174.7V220.3M572.5 172.0V208.3M573.5 174.4V208.3M574.5 172.2V203.1M575.5 167.5V208.4M576.5 171.4V219.9M577.5 170.6V219.9M578.5 171.0V213.9M579.5 170.4V210.9M580.5 168.5V210.9M581.5 168.4V205.5M582.5 171.9V219.8M583.5 174.2V219.8M584.5 173.2V217.7M585.5 174.1V211.3M586.5 172.8V211.3M587.5 171.1V205.2M588.5 173.7V207.5M589.5 172.2V212.0M590.5 167.9V212.0M591.5 172.3V201.5M592.5 171.0V206.5M593.5 174.7V206.5M594.5 174.4V206.1M595.5 169.2V214.6M596.5 170.4V214.6M597.5 170.9V212.9M598.5 169.8V212.9M599.5 171.9V226.0M600.5 172.4V226.0M601.5 170.3V206.1M602.5 169.8V214.2M603.5 174.3V214.2M604.5 174.0V207.9M605.5 172.1V213.6M606.5 170.4V214.8M607.5 172.6V214.8M608.5 173.6V213.2M609.5 171.3V213.2M610.5 170.2V210.6M611.5 170.3V213.4M612.5 173.1V213.4M613.5 169.3V207.2M614.5 170.1V214.0M615.5 167.2V214.5M616.5 170.0V216.6M617.5 170.9V216.6M618.5 171.6V216.6M619.5 172.1V212.6M620.5 169.2V212.6M621.5 173.6V212.2M622.5 171.6V216.0M623.5 172.5V216.0M624.5 169.8V210.4M625.5 172.1V210.4M626.5 173.7V203.4M627.5 170.6V212.5M628.5 173.8V212.5M629.5 171.1V207.2M630.5 173.4V209.7M631.5 171.6V209.7M632.5 169.1V209.7M633.5 170.5V204.6M634.5 172.5V206.8M635.5 172.2V206.8M636.5 171.5V212.7M637.5 171.4V217.2M638.5 173.0V217.2M639.5 172.0V208.4M640.5 166.9V210.1M641.5 173.2V217.1M642.5 171.9V217.1M643.5 171.8V217.1M644.5 170.7V208.2M645.5 174.8V210.8M646.5 175.0V210.8M647.5 171.2V210.6M648.5 172.1V206.7M649.5 166.6V205.6M650.5 171.8V209.3M651.5 174.9V209.3M652.5 172.5V212.4M653.5 170.0V212.4M654.5 171.6V206.1M655.5 173.3V219.1M656.5 176.0V219.1M657.5 171.9V219.1M658.5 171.9V208.0M659.5 171.9V212.8M660.5 172.3V212.8M661.5 171.4V212.7M662.5 168.2V218.3M663.5 172.5V218.3M664.5 173.4V218.3M665.5 171.0V206.6M666.5 173.3V207.8M667.5 166.8V207.8M668.5 170.9V211.4M669.5 173.1V211.4M670.5 172.6V210.2M671.5 172.9V214.6M672.5 173.5V214.6M673.5 172.8V211.9M674.5 170.9V211.9M675.5 176.6V208.1M676.5 174.4V216.3M677.5 167.9V219.9M678.5 174.1V219.9M679.5 171.7V216.6M680.5 168.7V210.4M681.5 171.4V211.6M682.5 170.0V219.7M683.5 171.9V219.7M684.5 171.5V202.6M685.5 169.3V210.0M686.5 174.3V210.0M687.5 172.8V209.3M688.5 173.5V211.6M689.5 171.1V211.6M690.5 167.7V207.3M691.5 174.0V207.3M692.5 173.6V203.9M693.5 167.4V209.6M694.5 170.0V217.8M695.5 170.5V217.8M696.5 173.1V201.6M697.5 172.9V209.2M698.5 171.3V209.2M699.5 170.6V209.2M700.5 169.1V208.9M701.5 170.4V211.5M702.5 169.5V212.3M703.5 171.1V212.3M704.5 175.4V207.8M705.5 171.0V209.7M706.5 172.3V209.7M707.5 172.9V209.8M708.5 170.2V218.9M709.5 171.6V218.9M710.5 168.6V214.9M711.5 172.9V205.7M712.5 169.6V207.3M713.5 169.0V207.3M714.5 170.2V207.9M715.5 170.0V207.9M716.5 171.9V207.9M717.5 168.4V206.9M718.5 170.6V208.0" stroke="#ffff00" stroke-width="1.02" fill="none"/><path d="M173.5 215.2V218.8M176.5 213.3V217.6M180.5 215.9V219.4M188.5 214.6V219.4M192.5 216.2V222.5M195.5 214.5V217.2M199.5 211.7V215.7M201.5 211.7V216.0M204.5 211.6V219.2M207.5 212.9V229.2M211.5 226.5V235.1M215.5 210.0V215.4M217.5 211.9V217.9M225.5 214.0V221.7M228.5 213.4V222.9M234.5 216.0V220.9M238.5 212.6V217.3M242.5 217.9V218.6M244.5 213.1V229.5M246.5 213.8V219.4M248.5 213.8V216.3M250.5 208.8V220.1M253.5 209.4V216.8M256.5 212.5V213.5M258.5 217.1V229.3M262.5 213.6V215.7M264.5 211.5V227.2M271.5 218.6V224.9M274.5 219.1V221.2M277.5 211.3V216.3M280.5 213.9V215.0M282.5 213.9V215.4M286.5 213.7V227.8M290.5 215.9V216.6M293.5 209.1V211.3M296.5 211.5V219.4M298.5 209.0V219.1M300.5 212.5V218.0M302.5 214.9V218.8M306.5 208.0V218.0M308.5 223.4V231.4M310.5 223.4V224.1M312.5 216.8V227.9M317.5 217.4V250.0M324.5 210.3V221.4M326.5 220.1V227.3M329.5 211.7V218.4M332.5 209.4V211.1M334.5 220.6V232.1M337.5 214.5V223.8M339.5 214.5V227.7M341.5 211.9V215.5M345.5 210.3V230.7M348.5 206.8V209.3M350.5 205.2V216.6M352.5 209.1V212.9M354.5 209.1V213.9M358.5 214.9V216.2M361.5 218.2V222.4M366.5 213.5V219.3M368.5 208.2V216.0M372.5 214.0V217.4M375.5 214.3V222.0M377.5 214.3V219.3M380.5 209.1V220.5M383.5 209.9V222.4M387.5 219.9V225.1M390.5 212.0V212.7M393.5 211.3V217.9M395.5 211.3V214.8M398.5 216.8V217.8M403.5 213.3V216.9M405.5 217.3V229.9M410.5 216.7V224.8M413.5 211.7V212.1M415.5 219.6V227.0M419.5 217.0V231.5M422.5 216.6V221.7M424.5 216.6V218.4M427.5 214.5V215.3M431.5 223.5V231.1M435.5 214.0V214.8M439.5 215.9V217.2M441.5 215.9V218.9M443.5 209.6V218.1M446.5 213.0V214.6M451.5 215.0V217.4M454.5 211.0V211.8M456.5 207.8V218.3M458.5 205.2V216.4M461.5 213.2V216.3M464.5 209.6V231.4M466.5 212.1V214.2M471.5 215.1V222.2M474.5 212.6V213.1M477.5 220.7V223.4M480.5 216.7V219.9M484.5 213.9V221.5M486.5 213.9V219.4M488.5 205.0V228.1M491.5 216.1V221.5M495.5 214.9V226.8M499.5 204.4V212.7M502.5 211.6V219.4M504.5 208.2V211.1M506.5 207.0V216.1M508.5 211.7V225.7M511.5 206.6V214.1M513.5 206.6V217.1M516.5 211.5V215.1M518.5 211.5V219.6M520.5 210.7V217.7M522.5 212.1V215.9M527.5 209.6V216.9M530.5 212.9V217.5M533.5 211.4V214.2M539.5 210.7V211.7M541.5 215.3V224.7M544.5 218.0V223.6M549.5 215.1V218.1M552.5 209.6V210.1M557.5 212.3V220.5M559.5 214.3V218.0M561.5 214.3V215.8M564.5 210.9V218.1M567.5 214.0V217.2M571.5 220.3V222.8M573.5 208.3V219.0M577.5 219.9V227.9M580.5 210.9V224.0M583.5 219.8V228.3M586.5 211.3V211.9M589.5 212.0V213.4M593.5 206.5V213.0M595.5 214.6V219.2M600.5 226.0V227.0M603.5 214.2V224.9M607.5 214.8V216.2M609.5 213.2V216.9M611.5 213.4V214.8M616.5 216.6V218.0M618.5 216.6V220.3M620.5 212.6V214.3M623.5 216.0V217.6M625.5 210.4V220.2M628.5 212.5V213.3M630.5 209.7V212.1M632.5 209.7V210.7M634.5 206.8V211.5M637.5 217.2V220.9M645.5 210.8V212.6M650.5 209.3V229.0M653.5 212.4V215.4M655.5 219.1V221.8M657.5 219.1V228.7M659.5 212.8V215.8M662.5 218.3V226.1M664.5 218.3V219.0M666.5 207.8V216.7M668.5 211.4V221.4M672.5 214.6V215.3M674.5 211.9V212.3M678.5 219.9V221.4M682.5 219.7V231.7M686.5 210.0V211.6M688.5 211.6V212.3M691.5 207.3V207.9M695.5 217.8V231.7M697.5 209.2V214.0M699.5 209.2V211.5M702.5 212.3V217.0M705.5 209.7V219.6M708.5 218.9V229.7M712.5 207.3V213.2M714.5 207.9V212.9M716.5 207.9V209.7" stroke="#f2ee18" stroke-width="1" fill="none"/><path d="M175.03 213.3V215.3M177.90 209.0V217.1M178.47 203.9V213.5M180.01 219.4V235.3M184.77 210.1V215.3M185.80 212.7V214.9M186.62 213.2V238.3M188.21 219.4V220.2M195.89 217.2V240.7M196.36 214.5V216.5M197.15 213.3V233.8M201.34 216.0V217.5M202.82 211.7V215.2M203.32 211.6V220.3M204.70 219.2V237.6M205.98 209.4V218.7M209.01 214.6V222.5M213.34 211.6V216.4M218.09 211.9V219.3M221.55 216.8V219.9M222.32 216.8V221.3M223.08 211.8V224.1M225.16 221.7V223.4M227.41 207.3V209.4M229.46 213.4V214.7M231.03 205.0V211.3M232.84 209.2V222.7M235.11 216.0V217.6M237.29 209.3V214.1M239.98 212.6V215.4M241.48 217.9V220.9M242.40 218.6V223.7M245.50 212.3V220.2M246.09 219.4V221.6M252.28 209.4V229.7M267.94 212.0V250.0M269.73 217.1V226.6M271.67 224.9V238.1M274.03 221.2V224.6M277.63 216.3V217.4M278.47 211.3V224.6M279.05 200.9V230.7M280.32 215.0V216.0M281.19 213.9V219.0M282.47 215.4V230.3M285.00 213.7V218.8M286.28 227.8V231.2M288.37 209.5V213.1M289.61 209.4V214.5M290.55 216.6V232.8M293.82 211.3V213.9M295.37 211.5V226.3M298.61 219.1V240.6M299.89 209.0V222.6M301.62 212.5V219.9M304.38 207.2V222.4M305.23 208.0V208.6M307.97 202.0V229.2M309.60 223.4V224.8M310.98 224.1V226.9M311.42 213.7V233.2M312.98 227.9V232.0M313.29 216.8V227.1M315.44 211.2V217.1M320.78 209.1V213.2M321.27 205.7V214.4M322.99 208.3V220.1M323.61 209.9V213.1M325.74 210.3V222.4M326.76 227.3V228.7M327.53 220.1V226.4M329.46 218.4V245.1M331.04 206.0V211.3M338.39 214.5V223.8M339.85 227.7V237.5M342.69 211.9V236.2M344.91 210.0V216.4M347.50 206.8V208.0M349.81 204.6V215.9M354.70 213.9V215.1M355.84 207.4V210.8M357.71 214.9V233.1M360.41 201.1V202.9M361.62 222.4V225.6M363.11 216.9V234.9M364.07 210.1V226.3M366.88 219.3V235.4M367.43 208.2V211.1M368.60 216.0V222.0M369.94 205.0V218.6M376.52 214.3V219.3M377.23 219.3V268.0M378.74 208.5V215.7M381.09 209.1V249.8M382.59 208.4V239.7M383.88 222.4V235.2M386.05 219.9V221.6M388.22 204.6V217.7M390.82 212.7V219.1M391.62 212.0V221.9M392.24 205.4V226.1M393.61 217.9V222.6M394.39 211.3V223.2M396.80 211.0V221.7M399.74 216.8V226.0M400.10 205.5V220.9M401.20 211.9V233.9M402.89 213.3V214.2M404.76 212.9V219.5M406.62 217.3V225.3M407.47 213.7V243.6M408.15 204.2V204.8M409.37 210.4V217.1M410.88 224.8V229.8M411.25 216.7V246.9M412.16 211.7V214.7M413.24 212.1V222.3M420.73 207.8V210.8M421.20 213.5V224.1M422.23 221.7V229.1M424.36 218.4V219.1M425.47 211.1V212.5M427.16 215.3V232.2M429.65 221.0V228.1M430.98 221.8V234.3M432.41 223.5V233.1M434.52 207.2V219.8M435.09 214.8V216.1M436.90 214.0V216.4M437.94 212.8V227.3M438.24 211.5V238.2M439.40 217.2V223.9M440.26 215.9V225.4M441.31 218.9V219.8M445.08 203.2V209.1M448.86 212.1V227.7M453.31 211.0V219.0M454.83 211.8V224.9M455.12 207.8V229.3M457.82 205.2V219.7M458.13 216.4V225.4M459.24 203.7V230.0M461.25 216.3V217.2M462.70 213.2V222.2M463.20 205.8V211.6M464.37 231.4V246.8M465.42 209.6V213.7M473.38 212.6V227.7M474.07 213.1V221.4M476.29 220.7V226.5M478.03 218.0V222.3M479.13 208.2V214.6M482.61 215.5V225.4M483.43 213.6V226.2M484.33 221.5V223.3M486.73 219.4V235.0M487.53 202.5V210.6M488.71 228.1V229.8M490.12 215.1V216.2M491.91 221.5V222.7M492.43 216.1V225.6M495.60 226.8V230.9M496.81 211.4V236.0M500.39 203.0V213.7M501.28 211.6V214.1M502.56 219.4V222.5M503.75 208.2V222.7M504.35 211.1V218.4M507.40 205.1V215.4M508.83 225.7V237.2M509.04 211.7V222.2M511.90 214.1V220.2M512.80 206.6V211.2M515.38 210.6V211.4M517.18 211.5V221.2M518.32 219.6V222.7M519.31 209.3V231.8M528.28 209.6V228.4M529.09 211.3V238.7M531.71 212.9V221.8M532.93 206.9V214.2M533.72 214.2V217.2M539.90 211.7V217.4M541.39 224.7V231.3M542.39 215.3V240.7M545.39 212.4V219.9M547.72 209.9V218.3M548.89 211.2V226.8M549.31 218.1V245.9M552.77 210.1V214.2M556.73 205.4V218.2M558.90 212.3V214.4M560.97 214.3V221.8M561.03 215.8V238.6M563.18 208.3V209.6M566.06 214.0V220.7M571.84 222.8V227.1M572.10 208.3V214.0M573.16 219.0V229.3M580.10 224.0V227.1M581.06 205.5V241.9M582.37 219.8V226.9M584.08 217.7V219.1M585.54 211.3V231.4M590.95 212.0V214.9M592.30 206.5V213.7M593.48 213.0V223.1M595.38 219.2V223.4M599.30 226.0V232.3M601.05 206.1V232.8M603.07 224.9V232.7M604.10 207.9V221.0M607.09 216.2V222.6M608.81 213.2V213.7M609.77 216.9V217.8M610.02 210.6V212.8M611.46 214.8V225.1M612.52 213.4V224.0M614.44 214.0V218.3M615.09 214.5V220.7M617.51 216.6V236.2M621.64 212.2V218.9M629.99 207.2V210.9M630.42 212.1V220.3M631.47 209.7V214.3M632.67 210.7V215.0M633.17 204.6V208.5M634.07 211.5V224.0M636.20 212.7V221.2M638.60 217.2V233.8M640.94 210.1V217.8M641.18 217.3V222.3M647.09 210.6V228.6M648.64 206.7V241.6M649.37 205.6V219.5M653.73 215.4V225.1M659.04 215.8V226.5M660.35 212.8V213.3M661.30 212.7V213.7M666.30 216.7V219.9M667.93 207.8V219.8M669.53 211.4V213.3M670.92 210.2V218.3M672.14 215.3V218.5M674.21 212.3V214.9M675.06 208.1V221.0M676.34 216.3V217.0M677.97 219.9V221.9M680.74 210.4V218.6M683.25 219.7V223.4M684.88 202.6V226.4M685.90 210.0V216.7M686.14 211.6V214.3M688.01 212.3V226.3M689.82 211.6V214.5M690.87 207.3V236.8M691.59 207.9V213.8M693.61 209.6V215.7M694.95 217.8V218.6M696.09 201.6V209.5M701.84 211.5V214.0M702.75 217.0V219.7M703.30 212.3V250.0M706.90 209.7V229.2M707.16 209.8V219.6M709.21 218.9V230.0M710.35 214.9V243.1M712.65 213.2V220.7M713.14 207.3V208.1M714.69 212.9V244.5M716.15 209.7V220.0" stroke="#e8e428" stroke-width="1" fill="none"/><path d="M171.62 216.6V242.4M172.80 215.2V215.8M174.74 211.6V265.0M176.94 217.6V219.3M179.54 209.6V219.1M182.28 209.3V242.0M187.00 214.6V217.3M189.98 209.5V210.6M190.29 213.2V216.4M191.54 216.2V219.2M192.20 222.5V224.3M193.69 209.9V210.8M198.30 206.8V213.3M200.00 211.7V212.8M206.75 202.9V216.5M207.02 229.2V236.7M208.37 212.9V215.7M210.18 225.7V227.4M211.20 235.1V236.2M212.93 226.5V227.7M214.52 208.9V211.8M215.11 215.4V223.8M216.80 210.0V217.9M217.04 217.9V222.9M219.61 212.2V222.0M220.34 212.4V232.8M224.69 213.0V232.2M226.99 214.0V231.7M228.59 222.9V240.9M230.06 203.8V213.5M233.73 211.9V216.6M234.63 220.9V231.2M236.15 209.6V224.4M239.00 217.3V225.2M240.49 207.0V218.0M243.38 213.1V232.6M244.96 229.5V246.6M247.78 213.8V224.1M248.36 216.3V224.3M249.77 208.8V229.7M250.66 220.1V237.7M251.36 205.8V209.4M253.77 216.8V237.9M254.29 207.6V218.2M255.65 212.5V221.2M256.01 213.5V226.0M257.25 205.0V207.2M258.46 229.3V245.6M259.65 217.1V230.0M260.35 206.3V213.1M261.74 213.6V218.0M262.35 215.7V222.3M263.87 211.5V223.9M264.98 227.2V232.8M265.52 209.2V212.8M266.17 207.3V222.1M268.69 212.3V213.5M270.78 218.6V224.9M272.62 216.0V221.3M273.64 211.1V230.1M275.44 219.1V220.1M276.22 200.6V217.2M283.61 211.8V250.0M284.24 214.0V216.8M287.12 210.2V221.0M292.58 209.1V210.6M294.81 206.1V221.8M296.60 219.4V227.4M297.96 208.0V214.1M300.11 218.0V275.0M303.63 214.9V233.2M308.96 231.4V238.6M314.12 212.2V228.9M316.78 211.2V215.0M318.01 217.4V225.4M319.27 211.9V228.7M324.64 221.4V222.8M328.30 207.5V215.0M330.75 211.7V221.5M332.46 211.1V217.5M333.89 209.4V214.0M334.01 232.1V236.4M335.43 220.6V237.2M336.71 213.3V223.5M337.48 223.8V250.0M340.30 210.9V219.3M341.07 215.5V217.2M343.29 208.8V214.4M346.48 210.3V211.1M348.15 209.3V217.4M350.23 216.6V250.0M351.79 205.2V225.7M352.03 212.9V230.6M353.98 209.1V218.4M356.65 213.1V215.3M358.29 216.2V250.0M359.15 212.6V228.2M365.58 213.5V250.0M370.06 212.7V222.5M371.15 214.0V216.2M372.51 217.4V221.2M373.55 207.9V216.1M374.26 201.6V233.6M375.25 222.0V226.8M379.71 209.0V216.6M380.09 220.5V221.3M384.32 209.9V227.5M385.03 213.8V220.5M387.95 225.1V231.6M389.97 209.0V222.6M395.83 214.8V219.5M397.85 207.7V222.0M398.59 217.8V232.8M405.47 229.9V237.3M414.03 207.6V211.0M415.37 227.0V229.2M416.69 219.6V250.0M417.47 215.8V224.9M418.12 217.0V219.5M419.29 231.5V250.0M423.40 216.6V218.5M426.73 214.5V232.5M428.67 208.4V222.4M431.06 231.1V233.4M433.55 223.5V226.9M442.04 209.6V217.4M443.18 218.1V230.1M444.40 209.0V210.5M446.11 214.6V223.1M447.92 213.0V219.4M449.02 208.6V209.2M450.49 215.0V217.8M451.38 217.4V231.5M452.73 208.8V215.9M456.09 218.3V224.0M460.43 208.2V268.0M466.75 214.2V231.3M467.90 212.1V219.5M468.76 211.1V228.9M469.44 202.6V206.8M470.66 215.1V227.7M471.73 222.2V243.1M472.27 213.5V229.4M475.26 207.1V211.7M477.76 223.4V225.8M481.86 216.7V250.0M485.58 213.9V218.1M489.94 205.0V220.2M493.77 212.7V219.4M494.53 214.9V215.7M497.05 207.2V228.2M498.03 204.4V210.1M499.48 212.7V242.1M505.98 207.0V220.2M506.85 216.1V224.6M510.10 202.2V210.4M513.68 217.1V218.9M514.62 206.4V227.9M516.51 215.1V216.6M520.48 217.7V224.5M521.40 210.7V216.8M522.82 215.9V218.9M523.69 212.1V221.4M525.54 211.8V214.8M526.36 208.5V216.8M527.68 216.9V224.1M530.58 217.5V220.4M534.75 211.4V212.2M535.96 210.6V214.3M536.69 208.4V212.8M537.74 210.7V238.9M538.21 210.7V224.2M540.97 209.4V214.0M543.65 218.0V220.6M544.91 223.6V237.7M546.69 204.7V210.8M550.62 215.1V219.4M551.17 209.6V224.0M553.06 208.6V214.2M554.83 223.0V230.9M557.43 220.5V238.7M559.28 218.0V224.9M562.56 208.6V236.3M564.59 218.1V219.5M565.69 210.9V231.5M567.83 217.2V224.4M568.32 213.8V229.5M569.65 204.2V214.4M570.23 220.3V222.5M574.15 203.1V218.9M575.10 208.4V209.0M576.74 219.9V230.1M577.80 227.9V228.7M578.92 213.9V220.5M579.63 210.9V217.3M583.68 228.3V231.9M587.12 205.2V220.8M588.37 207.5V210.9M589.50 213.4V221.1M591.76 201.5V226.2M594.74 206.1V223.3M597.50 212.9V231.6M598.79 212.9V214.8M600.85 227.0V228.1M602.24 214.2V220.0M605.98 213.6V215.0M606.39 214.8V218.3M613.22 207.2V209.4M616.95 218.0V231.0M618.39 220.3V227.8M619.43 212.6V215.1M620.90 214.3V247.3M622.02 216.0V239.3M623.41 217.6V220.3M624.83 210.4V213.3M625.38 220.2V228.5M626.76 203.4V209.4M627.15 212.5V230.4M628.42 213.3V215.7M635.90 206.8V218.7M637.83 220.9V223.2M639.24 208.4V215.5M642.27 217.1V226.7M644.37 208.2V211.6M645.15 212.6V233.0M646.97 210.8V215.6M650.58 229.0V231.1M651.24 209.3V210.8M652.26 212.4V215.2M654.48 206.1V226.2M655.01 221.8V250.0M656.42 219.1V238.0M657.61 228.7V233.3M658.06 208.0V214.7M662.65 226.1V228.8M663.37 218.3V220.6M664.71 219.0V220.3M665.95 206.6V228.9M668.45 221.4V228.4M671.55 214.6V218.2M673.49 211.9V219.0M679.28 216.6V222.5M681.83 211.6V224.1M682.39 231.7V249.8M687.74 209.3V214.0M692.72 203.9V214.4M695.06 231.7V234.6M698.46 209.2V213.0M699.89 211.5V223.7M700.07 208.9V210.0M704.76 207.8V211.6M708.26 229.7V231.1M711.43 205.7V217.4M715.57 207.9V221.7M717.49 206.9V212.6M718.90 208.0V220.6" stroke="#deda30" stroke-width="0.9" fill="none"/></svg><div style="position:absolute;right:888.50px;top:127.73px;font-size:10px;line-height:10px;color:#dcd84e;white-space:nowrap;letter-spacing:-0.4px;">-20</div><div style="position:absolute;right:888.50px;top:137.33px;font-size:10px;line-height:10px;color:#dcd84e;white-space:nowrap;letter-spacing:-0.4px;">dBm</div><div style="position:absolute;right:887.80px;top:180.43px;font-size:10px;line-height:10px;color:#dcd84e;white-space:nowrap;letter-spacing:-0.4px;">LogMag</div><div style="position:absolute;right:888.50px;top:222.53px;font-size:10px;line-height:10px;color:#dcd84e;white-space:nowrap;letter-spacing:-0.4px;">10</div><div style="position:absolute;right:888.50px;top:232.93px;font-size:10px;line-height:10px;color:#dcd84e;white-space:nowrap;letter-spacing:-0.4px;">dB</div><div style="position:absolute;right:888.50px;top:243.33px;font-size:10px;line-height:10px;color:#dcd84e;white-space:nowrap;letter-spacing:-0.4px;">/div</div><div style="position:absolute;right:888.50px;top:286.54px;font-size:10px;line-height:10px;color:#dcd84e;white-space:nowrap;letter-spacing:-0.4px;">-120</div><div style="position:absolute;right:888.50px;top:296.54px;font-size:10px;line-height:10px;color:#dcd84e;white-space:nowrap;letter-spacing:-0.4px;">dBm</div><div style="position:absolute;left:172.50px;top:307.13px;font-size:10px;line-height:10px;color:#dcd84e;white-space:nowrap;letter-spacing:-0.4px;">Start: 0 s</div><div style="position:absolute;right:341.00px;top:307.34px;font-size:10px;line-height:10px;color:#dcd84e;white-space:nowrap;letter-spacing:-0.4px;">Stop: 999.98 us</div>
<div style="position:absolute;left:105px;top:394px;width:621px;height:205px;background:#eeeeee"></div><svg style="position:absolute;left:106px;top:395px" width="619" height="203" viewBox="106 395 619 203"><rect x="106" y="395" width="619" height="203" fill="#000"/><path d="M171.5 407 V586 M171 407.5 H719 M226.5 407 V586 M171 425.5 H719 M280.5 407 V586 M171 443.5 H719 M335.5 407 V586 M171 461.5 H719 M390.5 407 V586 M171 478.5 H719 M444.5 407 V586 M171 496.5 H719 M499.5 407 V586 M171 514.5 H719 M554.5 407 V586 M171 532.5 H719 M609.5 407 V586 M171 550.5 H719 M663.5 407 V586 M171 567.5 H719 M718.5 407 V586 M171 585.5 H719" stroke="#828282" stroke-width="1" fill="none"/><path d="M171.5 457.0V480.8M172.5 448.9V478.8M173.5 454.5V479.2M174.5 457.6V480.5M175.5 453.9V480.5M176.5 453.9V484.0M177.5 458.3V484.0M178.5 459.0V483.4M179.5 446.9V481.6M180.5 454.7V481.6M181.5 453.2V477.0M182.5 449.9V481.4M183.5 448.1V481.4M184.5 456.8V483.7M185.5 455.4V486.4M186.5 453.8V488.6M187.5 454.4V488.6M188.5 451.5V484.5M189.5 450.0V482.0M190.5 454.9V487.8M191.5 456.6V491.8M192.5 453.0V491.8M193.5 453.5V473.8M194.5 451.0V487.0M195.5 445.4V487.0M196.5 456.0V482.7M197.5 455.5V483.6M198.5 447.4V483.9M199.5 456.0V483.9M200.5 458.4V481.5M201.5 455.7V481.8M202.5 452.5V490.0M203.5 446.4V490.0M204.5 454.7V478.7M205.5 451.7V482.3M206.5 454.5V482.3M207.5 450.6V493.2M208.5 456.4V493.2M209.5 455.5V475.8M210.5 452.6V479.8M211.5 454.0V479.8M212.5 452.9V479.8M213.5 450.6V472.4M214.5 453.3V478.0M215.5 453.7V478.0M216.5 452.8V471.7M217.5 449.8V484.6M218.5 456.8V486.6M219.5 458.7V486.6M220.5 453.2V475.1M221.5 448.3V479.0M222.5 447.1V479.0M223.5 451.3V480.2M224.5 456.9V481.4M225.5 446.1V481.4M226.5 453.1V484.1M227.5 452.6V487.1M228.5 448.3V487.1M229.5 447.2V482.9M230.5 444.8V472.0M231.5 447.2V477.6M232.5 453.3V477.6M233.5 451.6V478.3M234.5 446.8V478.8M235.5 460.2V478.8M236.5 450.2V478.8M237.5 461.1V476.6M238.5 457.0V481.9M239.5 456.5V481.9M240.5 458.8V478.2M241.5 451.8V481.5M242.5 449.6V484.3M243.5 448.6V484.3M244.5 450.9V492.2M245.5 452.5V492.2M246.5 446.3V479.8M247.5 450.3V483.0M248.5 443.9V485.4M249.5 452.2V485.4M250.5 453.1V483.4M251.5 458.6V480.1M252.5 445.9V480.1M253.5 453.9V480.1M254.5 452.2V486.3M255.5 454.8V486.3M256.5 455.3V484.0M257.5 451.9V484.0M258.5 452.4V475.3M259.5 457.6V478.2M260.5 449.6V478.2M261.5 449.6V485.1M262.5 453.0V485.1M263.5 458.6V480.1M264.5 452.4V481.2M265.5 449.3V481.2M266.5 460.2V481.2M267.5 447.3V477.4M268.5 451.0V481.5M269.5 446.3V481.5M270.5 456.9V477.1M271.5 451.7V477.1M272.5 454.8V476.6M273.5 449.8V486.3M274.5 450.8V486.3M275.5 464.3V480.6M276.5 450.1V476.0M277.5 455.8V475.2M278.5 451.6V482.0M279.5 447.7V482.2M280.5 448.6V482.2M281.5 459.9V482.2M282.5 452.6V474.7M283.5 445.8V474.7M284.5 453.4V470.0M285.5 445.6V482.0M286.5 452.0V482.0M287.5 453.3V480.8M288.5 459.0V474.9M289.5 454.3V477.8M290.5 450.1V477.8M291.5 462.4V481.0M292.5 450.3V481.0M293.5 449.3V476.7M294.5 453.6V476.5M295.5 449.4V477.1M296.5 460.5V477.1M297.5 449.2V471.9M298.5 452.5V476.5M299.5 449.2V476.8M300.5 451.7V476.8M301.5 445.4V478.2M302.5 453.9V478.2M303.5 452.5V485.8M304.5 444.7V485.8M305.5 446.6V479.0M306.5 448.0V476.7M307.5 450.1V481.0M308.5 448.5V481.0M309.5 448.0V477.8M310.5 457.3V477.2M311.5 453.9V483.5M312.5 449.3V483.5M313.5 449.4V471.8M314.5 452.5V480.2M315.5 449.6V480.6M316.5 450.1V482.6M317.5 455.9V482.6M318.5 450.3V474.5M319.5 461.5V478.0M320.5 454.4V478.0M321.5 444.5V478.0M322.5 447.4V473.4M323.5 450.6V497.6M324.5 450.3V497.6M325.5 448.4V485.2M326.5 445.0V482.1M327.5 451.0V484.0M328.5 448.0V485.3M329.5 443.0V485.3M330.5 448.7V478.7M331.5 447.6V479.4M332.5 453.5V479.4M333.5 448.9V479.4M334.5 451.6V477.1M335.5 454.9V473.6M336.5 446.2V481.4M337.5 461.2V482.4M338.5 447.5V482.4M339.5 443.7V481.0M340.5 455.4V486.3M341.5 455.8V486.3M342.5 445.2V475.7M343.5 453.7V476.8M344.5 450.3V476.8M345.5 451.5V475.8M346.5 456.4V475.8M347.5 449.7V469.7M348.5 454.2V480.5M349.5 447.0V480.5M350.5 454.9V480.6M351.5 455.3V480.6M352.5 449.4V480.6M353.5 446.5V474.9M354.5 453.5V470.6M355.5 447.1V479.4M356.5 440.5V485.2M357.5 447.1V485.2M358.5 455.0V473.9M359.5 452.7V480.8M360.5 448.3V480.8M361.5 455.2V475.0M362.5 444.8V490.5M363.5 444.3V490.5M364.5 449.3V484.7M365.5 454.6V478.4M366.5 452.4V485.5M367.5 448.3V485.5M368.5 454.6V474.8M369.5 453.2V479.3M370.5 449.5V479.6M371.5 446.1V479.6M372.5 449.8V483.0M373.5 442.0V483.0M374.5 443.9V475.4M375.5 450.2V490.4M376.5 448.6V490.4M377.5 455.8V485.7M378.5 449.4V479.7M379.5 457.5V480.3M380.5 448.6V480.3M381.5 455.7V478.2M382.5 446.0V475.8M383.5 453.9V480.6M384.5 450.8V480.6M385.5 443.9V480.9M386.5 455.5V480.9M387.5 446.2V480.9M388.5 449.3V473.1M389.5 454.4V479.8M390.5 446.9V479.8M391.5 450.2V474.7M392.5 449.0V485.6M393.5 451.8V485.6M394.5 450.0V473.1M395.5 449.2V474.1M396.5 449.5V484.7M397.5 447.6V484.7M398.5 456.3V478.5M399.5 451.6V486.1M400.5 452.5V486.1M401.5 452.2V494.0M402.5 450.3V494.0M403.5 451.4V486.2M404.5 451.9V479.9M405.5 444.9V479.5M406.5 452.6V481.9M407.5 455.2V481.9M408.5 454.9V485.4M409.5 450.9V485.4M410.5 454.7V489.8M411.5 455.6V489.8M412.5 454.9V482.6M413.5 450.0V482.6M414.5 454.0V480.6M415.5 458.4V480.6M416.5 451.6V473.7M417.5 456.4V480.7M418.5 452.7V480.7M419.5 458.7V476.8M420.5 456.0V474.6M421.5 457.5V482.8M422.5 450.1V482.8M423.5 453.7V482.8M424.5 453.0V478.4M425.5 458.0V486.4M426.5 446.0V486.4M427.5 452.2V474.5M428.5 453.9V479.4M429.5 457.9V479.4M430.5 454.4V474.2M431.5 454.4V483.6M432.5 455.2V483.6M433.5 459.0V480.7M434.5 450.8V479.8M435.5 447.8V475.7M436.5 455.3V478.6M437.5 461.2V478.6M438.5 455.3V477.2M439.5 453.6V479.9M440.5 458.0V482.7M441.5 452.4V482.7M442.5 458.5V473.1M443.5 450.8V478.9M444.5 454.5V478.9M445.5 450.2V480.0M446.5 452.5V480.0M447.5 444.0V482.1M448.5 448.5V482.4M449.5 455.5V482.4M450.5 448.6V478.8M451.5 457.7V488.6M452.5 450.2V488.6M453.5 452.7V483.9M454.5 458.4V483.9M455.5 456.1V473.3M456.5 457.0V479.4M457.5 451.1V481.4M458.5 448.8V481.4M459.5 449.0V476.5M460.5 453.6V484.7M461.5 455.1V484.7M462.5 452.3V482.2M463.5 452.5V474.8M464.5 448.4V474.8M465.5 451.4V472.8M466.5 449.5V483.0M467.5 448.2V483.0M468.5 455.1V483.0M469.5 454.7V475.1M470.5 454.9V482.3M471.5 452.8V486.3M472.5 459.0V486.3M473.5 458.4V475.4M474.5 453.0V485.6M475.5 456.2V485.6M476.5 453.0V475.1M477.5 457.6V482.0M478.5 453.7V487.9M479.5 459.0V487.9M480.5 457.6V479.7M481.5 452.9V480.4M482.5 444.3V480.4M483.5 454.1V480.4M484.5 456.4V476.6M485.5 460.3V480.9M486.5 452.0V480.9M487.5 451.0V481.0M488.5 456.3V481.0M489.5 460.6V481.8M490.5 454.0V481.8M491.5 457.0V482.6M492.5 456.3V489.1M493.5 450.3V489.1M494.5 453.6V487.1M495.5 452.3V482.9M496.5 456.9V488.4M497.5 454.3V488.4M498.5 453.2V485.0M499.5 452.3V483.8M500.5 454.2V491.1M501.5 457.8V491.1M502.5 454.7V479.1M503.5 452.1V475.3M504.5 449.3V470.8M505.5 451.4V486.6M506.5 456.1V486.6M507.5 464.0V486.3M508.5 455.4V481.6M509.5 457.3V481.6M510.5 451.3V478.0M511.5 445.4V486.6M512.5 446.7V486.9M513.5 451.8V486.9M514.5 455.9V482.5M515.5 448.4V482.5M516.5 448.1V474.4M517.5 447.6V477.7M518.5 458.4V477.7M519.5 453.6V490.0M520.5 450.9V490.0M521.5 450.7V482.6M522.5 453.3V490.7M523.5 448.0V490.7M524.5 450.4V473.1M525.5 445.5V479.4M526.5 455.0V479.4M527.5 454.0V478.0M528.5 455.2V482.4M529.5 448.5V482.4M530.5 449.8V475.4M531.5 445.8V478.5M532.5 447.9V478.5M533.5 452.7V475.5M534.5 449.3V476.2M535.5 449.8V476.8M536.5 444.7V477.6M537.5 444.9V479.9M538.5 444.0V479.9M539.5 464.3V477.6M540.5 453.5V485.2M541.5 448.0V485.2M542.5 451.0V483.8M543.5 444.7V474.9M544.5 447.9V476.8M545.5 450.5V476.8M546.5 448.7V472.9M547.5 442.3V474.3M548.5 445.9V486.0M549.5 449.3V486.0M550.5 448.1V472.9M551.5 444.1V466.6M552.5 447.6V476.7M553.5 447.4V478.8M554.5 450.7V478.8M555.5 450.4V478.8M556.5 450.7V474.4M557.5 446.8V471.0M558.5 445.2V474.8M559.5 453.5V481.1M560.5 457.4V481.1M561.5 449.6V477.0M562.5 452.9V477.1M563.5 454.7V477.1M564.5 451.1V477.1M565.5 448.4V474.1M566.5 441.3V477.0M567.5 443.1V482.4M568.5 449.9V482.4M569.5 448.9V477.6M570.5 454.0V474.9M571.5 449.2V480.6M572.5 448.8V480.6M573.5 451.1V474.8M574.5 449.9V477.7M575.5 451.5V477.7M576.5 450.1V477.2M577.5 454.5V479.7M578.5 451.1V479.7M579.5 456.8V479.8M580.5 451.5V479.8M581.5 453.8V472.1M582.5 457.1V482.4M583.5 443.9V486.7M584.5 454.7V486.7M585.5 453.9V486.7M586.5 444.0V480.4M587.5 453.2V481.7M588.5 452.2V481.7M589.5 451.2V481.9M590.5 449.6V481.9M591.5 455.2V480.1M592.5 459.7V478.7M593.5 449.4V477.9M594.5 458.0V478.6M595.5 451.2V478.6M596.5 456.1V472.6M597.5 456.0V478.6M598.5 449.5V478.6M599.5 443.9V478.6M600.5 448.2V474.8M601.5 456.6V482.2M602.5 453.3V482.2M603.5 456.9V482.2M604.5 450.5V477.6M605.5 449.7V472.5M606.5 443.6V482.3M607.5 449.5V482.3M608.5 456.3V478.2M609.5 451.0V483.2M610.5 447.1V483.2M611.5 445.8V480.6M612.5 446.1V473.5M613.5 449.8V480.9M614.5 447.6V480.9M615.5 448.5V479.9M616.5 452.0V476.0M617.5 460.9V476.1M618.5 452.9V476.1M619.5 447.8V476.9M620.5 451.6V481.5M621.5 449.6V481.5M622.5 447.8V477.7M623.5 454.3V477.7M624.5 453.4V475.8M625.5 456.9V479.5M626.5 455.5V479.5M627.5 450.0V469.6M628.5 451.9V476.5M629.5 444.6V476.5M630.5 449.1V478.0M631.5 448.4V481.3M632.5 449.9V481.3M633.5 450.6V476.4M634.5 455.5V478.8M635.5 445.4V478.8M636.5 450.0V477.5M637.5 443.4V478.7M638.5 448.7V478.7M639.5 446.4V480.8M640.5 450.0V480.8M641.5 448.5V478.9M642.5 445.7V482.4M643.5 449.4V482.4M644.5 454.0V471.0M645.5 452.5V481.0M646.5 456.3V481.0M647.5 456.6V481.0M648.5 446.3V477.7M649.5 451.1V479.9M650.5 457.2V479.9M651.5 442.4V482.0M652.5 456.9V482.0M653.5 453.5V479.6M654.5 452.5V479.6M655.5 453.2V475.0M656.5 465.2V478.7M657.5 457.8V480.9M658.5 453.4V481.6M659.5 447.7V481.6M660.5 452.2V480.1M661.5 451.8V473.0M662.5 454.3V478.8M663.5 453.9V478.8M664.5 457.9V474.7M665.5 457.2V482.9M666.5 459.6V482.9M667.5 453.1V481.7M668.5 457.4V488.4M669.5 455.7V488.4M670.5 456.1V484.4M671.5 451.2V486.8M672.5 455.8V488.9M673.5 459.9V488.9M674.5 445.9V494.9M675.5 455.9V494.9M676.5 447.8V492.7M677.5 461.2V479.5M678.5 456.1V486.5M679.5 452.8V486.5M680.5 449.2V482.5M681.5 456.3V482.5M682.5 455.0V479.3M683.5 455.3V479.8M684.5 452.7V479.8M685.5 454.7V477.2M686.5 457.1V482.4M687.5 457.1V482.4M688.5 451.2V483.1M689.5 461.8V483.1M690.5 459.7V484.9M691.5 450.1V491.2M692.5 451.9V491.2M693.5 451.1V483.7M694.5 459.1V482.6M695.5 452.7V469.2M696.5 450.2V475.4M697.5 453.6V475.4M698.5 454.6V476.7M699.5 448.2V476.7M700.5 450.1V482.4M701.5 450.4V482.8M702.5 459.6V482.8M703.5 451.7V482.4M704.5 454.0V478.4M705.5 450.2V483.4M706.5 450.4V483.4M707.5 450.4V476.8M708.5 447.7V483.6M709.5 456.7V489.1M710.5 452.9V489.1M711.5 451.7V489.1M712.5 448.2V484.1M713.5 462.2V483.4M714.5 452.7V483.7M715.5 452.8V483.7M716.5 446.1V472.9M717.5 452.3V484.3M718.5 451.7V492.8" stroke="#ffff00" stroke-width="1.02" fill="none"/><path d="M174.5 480.5V481.2M176.5 484.0V486.5M180.5 481.6V483.7M182.5 481.4V484.8M186.5 488.6V507.3M191.5 491.8V492.1M195.5 487.0V493.0M198.5 483.9V484.8M203.5 490.0V494.7M205.5 482.3V483.5M207.5 493.2V495.0M210.5 479.8V481.2M212.5 479.8V495.8M215.5 478.0V487.0M218.5 486.6V490.7M221.5 479.0V493.1M224.5 481.4V487.3M228.5 487.1V493.1M231.5 477.6V479.9M234.5 478.8V484.3M236.5 478.8V483.1M238.5 481.9V482.3M242.5 484.3V495.5M244.5 492.2V492.8M249.5 485.4V487.9M252.5 480.1V489.5M254.5 486.3V493.9M257.5 484.0V495.2M259.5 478.2V495.7M262.5 485.1V491.3M264.5 481.2V489.4M266.5 481.2V482.3M269.5 481.5V482.0M271.5 477.1V485.0M273.5 486.3V488.6M279.5 482.2V487.1M281.5 482.2V483.8M283.5 474.7V476.5M285.5 482.0V483.7M289.5 477.8V486.1M295.5 477.1V478.3M299.5 476.8V486.7M301.5 478.2V482.2M308.5 481.0V485.5M311.5 483.5V489.1M317.5 482.6V491.8M319.5 478.0V488.4M321.5 478.0V480.8M324.5 497.6V498.1M328.5 485.3V493.5M333.5 479.4V484.4M337.5 482.4V499.3M341.5 486.3V492.9M344.5 476.8V479.7M346.5 475.8V481.5M348.5 480.5V480.8M350.5 480.6V484.5M352.5 480.6V484.0M356.5 485.2V491.6M359.5 480.8V491.0M363.5 490.5V498.8M367.5 485.5V492.6M370.5 479.6V489.5M372.5 483.0V491.1M375.5 490.4V494.4M380.5 480.3V486.6M383.5 480.6V481.7M385.5 480.9V488.9M387.5 480.9V483.0M390.5 479.8V487.0M392.5 485.6V489.0M396.5 484.7V487.8M399.5 486.1V487.4M402.5 494.0V506.4M408.5 485.4V492.1M410.5 489.8V492.7M413.5 482.6V505.1M415.5 480.6V488.1M418.5 480.7V487.1M421.5 482.8V486.8M425.5 486.4V492.6M428.5 479.4V481.8M432.5 483.6V490.7M437.5 478.6V483.6M441.5 482.7V512.0M443.5 478.9V487.0M445.5 480.0V486.2M448.5 482.4V494.0M452.5 488.6V493.3M454.5 483.9V489.3M460.5 484.7V490.2M464.5 474.8V478.5M466.5 483.0V489.3M471.5 486.3V491.5M474.5 485.6V496.7M479.5 487.9V495.6M481.5 480.4V487.0M483.5 480.4V484.1M485.5 480.9V485.4M487.5 481.0V497.3M489.5 481.8V484.6M493.5 489.1V496.8M497.5 488.4V490.7M501.5 491.1V492.9M506.5 486.6V486.9M509.5 481.6V494.1M513.5 486.9V488.6M515.5 482.5V484.5M517.5 477.7V486.7M523.5 490.7V496.1M525.5 479.4V486.7M529.5 482.4V484.3M531.5 478.5V482.2M537.5 479.9V493.8M541.5 485.2V489.6M544.5 476.8V491.7M549.5 486.0V501.3M553.5 478.8V479.7M555.5 478.8V486.0M560.5 481.1V484.1M562.5 477.1V479.5M564.5 477.1V490.6M568.5 482.4V484.7M572.5 480.6V481.0M574.5 477.7V483.7M577.5 479.7V487.9M579.5 479.8V485.1M583.5 486.7V488.3M585.5 486.7V501.2M587.5 481.7V488.0M590.5 481.9V482.3M595.5 478.6V489.7M597.5 478.6V480.1M599.5 478.6V484.9M601.5 482.2V485.4M603.5 482.2V486.6M607.5 482.3V484.5M610.5 483.2V485.8M614.5 480.9V489.4M617.5 476.1V487.8M620.5 481.5V487.0M623.5 477.7V480.3M626.5 479.5V493.1M628.5 476.5V480.3M632.5 481.3V488.5M635.5 478.8V483.1M637.5 478.7V479.3M639.5 480.8V485.6M645.5 481.0V486.2M647.5 481.0V491.9M649.5 479.9V480.5M652.5 482.0V488.6M654.5 479.6V480.0M659.5 481.6V483.4M663.5 478.8V492.4M665.5 482.9V485.0M668.5 488.4V494.5M672.5 488.9V491.7M675.5 494.9V499.7M679.5 486.5V496.0M681.5 482.5V497.1M683.5 479.8V480.9M686.5 482.4V485.1M688.5 483.1V487.7M692.5 491.2V491.5M696.5 475.4V484.5M698.5 476.7V495.1M702.5 482.8V487.3M705.5 483.4V496.5M709.5 489.1V496.9M711.5 489.1V491.6M714.5 483.7V488.9" stroke="#f2ee18" stroke-width="1" fill="none"/><path d="M174.03 481.2V505.0M177.90 484.0V487.1M178.47 483.4V488.3M180.01 483.7V512.0M182.77 484.8V491.3M183.80 481.4V497.3M184.62 483.7V485.1M186.21 507.3V512.0M192.89 491.8V492.9M193.36 473.8V475.5M194.15 487.0V495.3M197.34 483.6V492.5M198.82 484.8V486.5M199.32 483.9V491.8M200.70 481.5V490.3M201.98 481.8V503.7M205.01 483.5V509.2M209.34 475.8V488.9M214.09 478.0V500.2M217.55 484.6V505.9M218.32 490.7V512.0M219.08 486.6V496.0M221.16 493.1V512.0M223.41 480.2V483.5M225.46 481.4V488.4M227.03 487.1V495.0M228.84 493.1V498.6M232.11 477.6V488.9M234.29 484.3V495.1M236.98 483.1V485.1M238.48 482.3V487.6M239.40 481.9V488.5M242.50 495.5V498.6M243.09 484.3V490.7M249.28 487.9V490.5M266.94 482.3V489.6M268.73 481.5V494.0M270.67 477.1V493.3M273.03 488.6V512.0M276.63 476.0V488.4M277.47 475.2V495.7M278.05 482.0V485.3M279.32 487.1V491.6M280.19 482.2V522.0M281.47 483.8V493.0M284.00 470.0V494.4M285.28 483.7V484.8M287.37 480.8V494.4M288.61 474.9V512.0M289.55 486.1V490.3M292.82 481.0V486.1M294.37 476.5V485.3M297.61 471.9V475.9M298.89 476.5V479.1M300.62 476.8V501.9M302.38 478.2V481.2M303.23 486.1V505.1M304.97 485.8V494.4M306.60 476.7V479.9M307.98 481.0V488.7M308.42 485.5V487.5M309.98 477.8V478.3M310.29 477.2V494.9M312.44 483.5V494.6M316.78 482.6V488.8M317.27 491.8V512.0M318.99 474.5V476.3M319.61 488.4V489.2M321.74 480.8V492.2M322.76 473.4V488.9M323.53 497.6V503.0M325.46 485.2V485.9M327.04 484.0V485.7M334.39 477.1V479.1M335.85 473.6V495.7M338.69 482.4V485.2M340.91 486.3V488.2M342.50 475.7V486.7M344.81 479.7V491.6M349.70 480.5V503.1M350.84 484.5V495.0M353.71 474.9V494.1M356.41 491.6V501.9M357.62 485.2V499.8M358.11 473.9V486.9M359.07 491.0V498.1M361.88 475.0V508.8M362.43 490.5V494.4M363.60 498.8V501.7M364.94 484.7V489.1M372.52 491.1V498.1M373.23 483.0V486.9M374.74 475.4V492.9M377.09 485.7V504.8M378.59 479.7V495.8M379.88 480.3V497.9M383.05 481.7V486.4M385.22 488.9V503.1M387.82 483.0V499.6M388.62 473.1V477.9M389.24 479.8V484.8M390.61 487.0V512.0M391.39 474.7V489.3M393.80 485.6V491.9M396.74 487.8V491.9M397.10 484.7V486.7M398.20 478.5V483.0M399.89 487.4V492.2M400.76 486.1V488.0M403.62 486.2V488.7M404.47 479.9V489.4M405.15 479.5V482.4M406.37 481.9V485.5M407.88 481.9V486.6M408.25 492.1V502.4M409.16 485.4V491.3M410.24 492.7V512.0M417.73 480.7V481.9M418.20 487.1V487.7M419.23 476.8V494.2M421.36 486.8V499.3M422.47 482.8V484.3M424.16 478.4V481.4M426.65 486.4V499.2M427.98 474.5V480.6M429.41 479.4V486.3M431.52 483.6V485.1M432.09 490.7V504.4M433.90 480.7V497.5M434.94 479.8V487.3M435.24 475.7V479.4M436.40 478.6V487.9M437.26 483.6V498.8M438.31 477.2V520.0M443.08 487.0V490.8M446.86 480.0V496.0M451.31 488.6V491.4M452.83 493.3V503.2M453.12 483.9V512.0M455.82 473.3V477.6M456.13 479.4V501.5M457.24 481.4V482.4M459.25 476.5V491.9M460.70 490.2V499.8M461.20 484.7V494.2M462.37 482.2V485.3M463.42 474.8V486.2M472.38 486.3V491.3M473.07 475.4V492.3M475.29 485.6V486.8M477.03 482.0V486.1M478.13 487.9V499.7M480.61 479.7V481.9M481.43 487.0V493.4M482.33 480.4V509.3M484.73 476.6V490.0M485.53 485.4V488.4M486.71 480.9V501.0M488.12 481.0V490.9M489.91 484.6V488.9M490.43 481.8V512.0M493.60 496.8V512.0M494.81 487.1V495.0M498.39 485.0V489.7M499.28 483.8V487.4M500.56 491.1V494.5M501.75 492.9V494.0M502.35 479.1V500.3M505.40 486.6V512.0M506.83 486.9V498.1M507.04 486.3V489.7M509.90 494.1V501.0M510.80 478.0V483.6M514.38 482.5V487.3M516.18 474.4V491.3M517.32 486.7V504.7M518.31 477.7V483.8M527.28 478.0V501.7M528.09 482.4V500.9M530.71 475.4V482.6M531.93 482.2V491.4M532.72 478.5V481.0M538.90 479.9V485.3M540.39 485.2V489.9M541.39 489.6V493.1M544.39 491.7V493.7M546.72 472.9V486.0M547.89 474.3V480.1M548.31 486.0V489.7M551.77 466.6V474.4M554.73 478.8V479.3M556.90 474.4V480.4M558.97 474.8V481.6M559.03 481.1V490.9M561.18 477.0V496.1M564.06 490.6V511.8M569.84 477.6V486.7M570.10 474.9V489.5M571.16 480.6V484.9M578.10 479.7V485.6M579.06 485.1V488.2M580.37 479.8V486.5M582.08 482.4V490.4M583.54 488.3V499.0M588.95 481.7V483.1M590.30 482.3V492.3M591.48 480.1V481.7M593.38 477.9V490.6M597.30 480.1V512.0M599.05 484.9V507.0M601.07 485.4V487.6M602.10 482.2V488.6M605.09 472.5V477.0M606.81 482.3V499.5M607.77 484.5V488.5M608.02 478.2V487.6M609.46 483.2V485.7M610.52 485.8V487.8M612.44 473.5V480.6M613.09 480.9V484.3M615.51 479.9V484.5M619.64 476.9V482.0M628.99 480.3V489.9M629.42 476.5V500.9M630.47 478.0V482.6M631.67 481.3V496.6M632.17 488.5V500.1M633.07 476.4V483.7M635.20 483.1V511.6M637.60 479.3V482.0M639.94 485.6V494.1M640.18 480.8V493.6M647.09 491.9V510.7M651.64 482.0V543.0M652.37 488.6V492.9M656.73 478.7V483.9M662.04 478.8V480.2M663.35 492.4V500.6M664.30 474.7V487.3M669.30 488.4V489.3M670.93 484.4V490.6M672.53 491.7V493.3M673.92 488.9V495.8M675.14 499.7V504.8M677.21 479.5V484.0M678.06 486.5V501.8M679.34 496.0V498.5M680.97 482.5V499.7M682.74 479.3V492.9M685.25 477.2V496.4M686.88 485.1V498.7M687.90 482.4V485.1M688.14 487.7V489.9M690.01 484.9V493.1M691.82 491.2V496.7M692.87 491.5V500.4M693.59 483.7V497.3M696.61 484.5V487.5M697.95 475.4V497.6M699.09 476.7V485.5M703.84 482.4V487.7M704.75 478.4V481.6M705.30 496.5V500.7M707.90 476.8V501.1M708.16 483.6V493.2M710.21 489.1V505.1M711.35 491.6V512.0M713.65 483.4V546.0M714.14 488.9V510.0M715.69 483.7V485.7M718.15 492.8V512.0" stroke="#e8e428" stroke-width="1" fill="none"/><path d="M171.62 480.8V490.5M172.80 478.8V487.0M173.74 479.2V481.7M176.94 486.5V492.8M179.54 481.6V491.7M181.28 477.0V479.8M185.00 486.4V487.6M187.98 488.6V512.0M188.29 484.5V488.8M189.54 482.0V490.9M190.20 487.8V494.1M191.69 492.1V495.3M195.30 493.0V494.1M196.00 482.7V492.2M202.75 490.0V492.6M203.02 494.7V510.3M204.37 478.7V486.4M206.18 482.3V507.5M207.20 495.0V504.7M208.93 493.2V505.9M210.52 481.2V487.2M211.11 479.8V482.4M212.80 495.8V512.0M213.04 472.4V476.2M215.61 487.0V512.0M216.34 471.7V483.0M220.69 475.1V492.3M222.99 479.0V482.2M224.59 487.3V497.5M226.06 484.1V491.3M229.73 482.9V487.1M230.63 472.0V484.2M233.15 478.3V492.0M236.00 478.8V501.0M237.49 476.6V493.3M240.38 478.2V482.1M241.96 481.5V483.1M244.78 492.8V497.8M245.36 492.2V494.8M246.77 479.8V511.6M247.66 483.0V484.1M248.36 485.4V486.4M250.77 483.4V486.3M251.29 480.1V484.2M252.65 489.5V490.7M253.01 480.1V494.0M254.25 493.9V497.2M255.46 486.3V492.6M256.65 484.0V491.5M257.35 495.2V506.1M258.74 475.3V482.1M259.35 495.7V496.5M260.87 478.2V479.2M261.98 485.1V491.5M263.52 480.1V491.6M265.17 481.2V482.0M267.69 477.4V484.3M269.78 482.0V483.7M271.62 485.0V489.0M272.64 476.6V482.5M274.44 486.3V489.1M275.22 480.6V485.5M282.61 474.7V480.4M283.24 476.5V481.1M286.12 482.0V499.4M290.58 477.8V485.0M293.81 476.7V486.1M295.60 478.3V479.0M296.96 477.1V482.2M299.11 486.7V487.4M301.63 482.2V496.8M305.96 479.0V486.4M311.12 489.1V503.8M313.78 471.8V484.0M314.01 480.2V491.8M315.27 480.6V482.5M320.64 478.0V503.8M324.30 498.1V512.0M326.75 482.1V485.4M328.46 493.5V503.5M329.89 485.3V491.4M330.01 478.7V480.2M331.43 479.5V482.2M332.71 479.4V501.8M333.48 484.4V493.1M336.30 481.4V489.8M337.07 499.3V504.9M339.29 481.0V484.1M341.48 492.9V498.8M343.15 476.8V495.7M345.23 475.8V499.4M346.79 481.5V485.4M347.03 469.7V477.3M348.98 480.8V494.2M352.65 484.0V493.4M354.29 470.6V476.8M355.15 479.4V480.3M360.58 480.8V483.5M365.06 478.4V480.3M366.15 485.5V491.5M368.51 474.8V490.4M369.55 479.3V518.0M370.26 489.5V501.4M371.25 479.6V499.7M375.71 494.4V500.2M376.09 490.4V502.5M380.32 486.6V487.9M381.03 478.2V485.1M384.95 480.6V482.1M386.97 480.9V484.9M392.83 489.0V491.5M394.85 473.1V476.0M395.59 474.1V489.4M401.47 494.0V497.3M411.03 489.8V510.8M412.37 482.6V487.2M413.69 505.1V508.9M414.47 480.6V491.6M415.12 488.1V512.0M416.29 473.7V485.5M420.40 474.6V497.6M423.73 482.8V505.2M425.67 492.6V504.2M428.06 481.8V487.2M430.55 474.2V475.5M439.04 479.9V488.2M440.18 482.7V495.2M442.40 473.1V479.4M444.11 478.9V493.7M445.92 486.2V501.3M447.02 482.1V488.1M448.49 494.0V499.1M449.38 482.4V494.0M450.73 478.8V489.4M454.09 489.3V493.2M458.43 481.6V486.3M464.75 478.5V493.9M465.90 472.8V486.2M466.76 489.3V494.4M467.44 483.0V494.9M468.66 483.2V497.6M469.73 475.1V482.0M471.27 491.5V501.6M474.26 496.7V502.8M476.76 475.1V485.1M479.86 495.6V496.4M483.58 484.1V488.6M487.94 497.3V498.8M491.77 482.6V487.7M492.53 489.1V505.8M495.05 482.9V497.7M496.03 488.4V512.0M497.48 490.7V512.0M503.98 475.3V480.5M504.85 470.8V486.6M508.10 481.6V483.2M511.68 486.6V494.8M512.62 486.9V491.2M515.51 484.5V502.8M519.48 490.0V510.4M520.40 490.2V498.4M521.82 482.6V495.4M522.69 490.7V495.0M524.54 473.1V478.4M525.36 486.7V490.1M526.68 479.4V485.7M529.58 484.3V495.7M533.75 475.5V489.0M534.96 476.2V483.7M535.69 476.8V480.0M536.74 477.6V480.9M537.21 493.8V495.3M539.97 477.6V490.2M542.65 483.8V502.1M543.91 474.9V487.6M545.69 476.8V486.2M549.62 501.3V502.4M550.17 472.9V473.9M552.06 476.7V487.5M553.83 479.7V481.2M555.43 486.0V489.9M557.28 471.0V482.2M560.56 484.1V489.9M562.59 479.5V498.7M563.69 477.1V483.8M565.83 474.1V480.0M566.32 477.0V493.1M567.65 482.4V484.2M568.23 484.7V491.0M572.15 481.0V481.8M573.10 474.8V478.8M574.74 483.7V485.2M575.80 477.7V483.0M576.92 477.2V483.7M577.63 487.9V490.7M581.68 472.1V476.7M584.12 486.7V493.2M586.37 480.4V487.2M587.50 488.0V512.0M589.76 481.9V491.5M592.74 478.7V495.6M594.50 478.6V479.5M595.79 489.7V491.2M598.85 478.6V498.0M600.24 474.8V476.2M603.98 486.6V499.1M604.39 477.6V494.9M611.22 480.6V485.4M614.95 489.4V490.0M616.39 476.0V504.4M617.43 487.8V499.3M618.90 476.1V478.8M620.02 487.0V497.6M622.41 477.7V485.0M623.83 480.3V483.3M624.38 475.8V484.7M625.76 479.5V485.4M626.15 493.1V506.2M627.42 469.6V474.5M634.90 478.8V482.0M636.83 477.5V478.4M638.24 478.7V489.0M642.27 482.6V484.3M644.37 471.0V471.7M645.15 486.2V492.8M646.97 481.0V496.0M653.58 479.6V489.7M654.24 480.0V483.4M655.26 475.0V475.9M657.48 480.9V484.4M658.01 481.6V486.2M659.42 483.4V491.1M660.61 480.1V493.6M661.06 473.0V485.2M665.65 485.0V507.3M666.37 482.9V485.3M667.71 481.7V491.0M668.95 494.5V510.7M671.45 486.8V487.8M674.55 494.9V512.0M676.49 492.7V502.0M681.28 497.1V500.1M683.83 480.9V501.5M684.39 479.8V481.6M689.74 483.1V511.8M695.72 469.2V478.3M698.06 495.1V512.0M700.46 482.4V493.8M701.89 482.8V495.1M702.07 487.3V488.9M706.76 483.4V500.2M709.26 496.9V509.4M712.43 484.1V484.6M716.57 472.9V482.5" stroke="#deda30" stroke-width="0.9" fill="none"/></svg><div style="position:absolute;right:888.50px;top:409.24px;font-size:10px;line-height:10px;color:#dcd84e;white-space:nowrap;letter-spacing:-0.4px;">-60</div><div style="position:absolute;right:888.50px;top:418.74px;font-size:10px;line-height:10px;color:#dcd84e;white-space:nowrap;letter-spacing:-0.4px;">dBm</div><div style="position:absolute;right:887.80px;top:461.74px;font-size:10px;line-height:10px;color:#dcd84e;white-space:nowrap;letter-spacing:-0.4px;">LogMag</div><div style="position:absolute;right:888.50px;top:503.74px;font-size:10px;line-height:10px;color:#dcd84e;white-space:nowrap;letter-spacing:-0.4px;">10</div><div style="position:absolute;right:888.50px;top:514.24px;font-size:10px;line-height:10px;color:#dcd84e;white-space:nowrap;letter-spacing:-0.4px;">dB</div><div style="position:absolute;right:888.50px;top:524.74px;font-size:10px;line-height:10px;color:#dcd84e;white-space:nowrap;letter-spacing:-0.4px;">/div</div><div style="position:absolute;right:888.50px;top:568.24px;font-size:10px;line-height:10px;color:#dcd84e;white-space:nowrap;letter-spacing:-0.4px;">-160</div><div style="position:absolute;right:888.50px;top:578.24px;font-size:10px;line-height:10px;color:#dcd84e;white-space:nowrap;letter-spacing:-0.4px;">dBm</div><div style="position:absolute;left:172.50px;top:588.74px;font-size:10px;line-height:10px;color:#dcd84e;white-space:nowrap;letter-spacing:-0.4px;">Start: 975 MHz</div><div style="position:absolute;right:341.00px;top:588.74px;font-size:10px;line-height:10px;color:#dcd84e;white-space:nowrap;letter-spacing:-0.4px;">Stop: 1.0249969482 GHz</div>
<div style="position:absolute;left:318px;top:636px;width:62px;height:18px;box-sizing:border-box;border:1px solid #2e9e2e;border-radius:3px;background:linear-gradient(#5fe85f,#2ad02a 55%,#1fc41f)"></div>
<div style="position:absolute;left:199.00px;width:300px;text-align:center;top:640.13px;font-size:11.3px;line-height:11.3px;color:#0f2f0f;white-space:nowrap;letter-spacing:0.25px;">Single</div>
<div style="position:absolute;left:384px;top:636px;width:62px;height:18px;box-sizing:border-box;border:1px solid #7a7a7a;border-radius:3px;background:linear-gradient(#ececec,#dedede)"></div>
<div style="position:absolute;left:265.00px;width:300px;text-align:center;top:640.13px;font-size:11.3px;line-height:11.3px;color:#1a1a1a;white-space:nowrap;letter-spacing:0.25px;">Continuous</div>
<div style="position:absolute;left:450px;top:636px;width:62px;height:18px;box-sizing:border-box;border:1px solid #7a7a7a;border-radius:3px;background:linear-gradient(#f0f0f0,#c9c9c9)"></div>
<div style="position:absolute;left:331.00px;width:300px;text-align:center;top:640.13px;font-size:11.3px;line-height:11.3px;color:#1a1a1a;white-space:nowrap;letter-spacing:0.25px;">Abort</div>
<div style="position:absolute;left:8px;top:663px;width:738px;height:2px;box-sizing:border-box;background:#bdbdbd"></div>
<div style="position:absolute;left:8px;top:665px;width:738px;height:3px;box-sizing:border-box;background:#dedcd8"></div>
<div style="position:absolute;left:0px;top:668px;width:1057px;height:2px;box-sizing:border-box;background:#3a5f84"></div>
<div style="position:absolute;left:746px;top:51px;width:311px;height:617px;box-sizing:border-box;background:#d5d5d5"></div>
<div style="position:absolute;left:746px;top:51px;width:1px;height:615px;box-sizing:border-box;background:#8a8a8a"></div>
<div style="position:absolute;left:746px;top:72px;width:291px;height:596px;box-sizing:border-box;border:1px solid #8a8a8a;border-bottom:none;background:#d8d8d8"></div>
<div style="position:absolute;left:804px;top:53px;width:49px;height:20px;box-sizing:border-box;border:1px solid #8a8a8a;border-radius:4px 4px 0 0;background:#d3d3d3"></div><div style="position:absolute;left:810.40px;top:58.29px;font-size:11px;line-height:11px;color:#5a5a5a;white-space:nowrap;letter-spacing:0.25px;">Trigger</div>
<div style="position:absolute;left:854px;top:53px;width:50px;height:20px;box-sizing:border-box;border:1px solid #8a8a8a;border-radius:4px 4px 0 0;background:#d3d3d3"></div><div style="position:absolute;left:860.40px;top:58.29px;font-size:11px;line-height:11px;color:#5a5a5a;white-space:nowrap;letter-spacing:0.25px;">Display</div>
<div style="position:absolute;left:905px;top:53px;width:64px;height:20px;box-sizing:border-box;border:1px solid #8a8a8a;border-radius:4px 4px 0 0;background:#d3d3d3"></div><div style="position:absolute;left:911.30px;top:58.29px;font-size:11px;line-height:11px;color:#5a5a5a;white-space:nowrap;letter-spacing:0.25px;">Reference</div>
<div style="position:absolute;left:970px;top:53px;width:45px;height:20px;box-sizing:border-box;border:1px solid #8a8a8a;border-radius:4px 4px 0 0;background:#d3d3d3"></div><div style="position:absolute;left:976.50px;top:58.29px;font-size:11px;line-height:11px;color:#5a5a5a;white-space:nowrap;letter-spacing:0.25px;">Status</div>
<div style="position:absolute;left:746px;top:52px;width:58px;height:21px;box-sizing:border-box;border:1px solid #6a6a6a;border-bottom:none;border-radius:4px 4px 0 0;background:#d8d8d8"></div><div style="position:absolute;left:753.80px;top:57.39px;font-size:11px;line-height:11px;color:#2a2a2a;white-space:nowrap;letter-spacing:0.25px;">Measure</div>
<div style="position:absolute;left:1055px;top:51px;width:2px;height:617px;box-sizing:border-box;background:#dedede"></div>
<div style="position:absolute;left:1038px;top:56px;width:17px;height:17px;box-sizing:border-box;border:1px solid #7e7e7e;border-radius:50%;background:#eaeaea"></div>
<svg style="position:absolute;left:1038px;top:56px" width="17" height="17"><path d="M7.2 5.2 L10 8.5 L7.2 11.8" fill="none" stroke="#5e5e5e" stroke-width="1.1"/></svg>
<div style="position:absolute;left:749px;top:84px;width:285px;height:185px;box-sizing:border-box;border:1px solid #8c8c8c;border-radius:4px;"></div><div style="position:absolute;left:750px;top:85px;width:283px;height:183px;box-sizing:border-box;border:1px solid #e2e2e2;border-right:none;border-bottom:none;border-radius:3px;"></div><div style="position:absolute;left:753px;top:82px;width:66px;height:5px;background:#d8d8d8"></div><div style="position:absolute;left:754.50px;top:78.69px;font-size:11px;line-height:11px;color:#262626;white-space:nowrap;letter-spacing:0.25px;">RF Settings</div>
<div style="position:absolute;left:749px;top:280px;width:285px;height:123px;box-sizing:border-box;border:1px solid #8c8c8c;border-radius:4px;"></div><div style="position:absolute;left:750px;top:281px;width:283px;height:121px;box-sizing:border-box;border:1px solid #e2e2e2;border-right:none;border-bottom:none;border-radius:3px;"></div><div style="position:absolute;left:753px;top:278px;width:18px;height:5px;background:#d8d8d8"></div><div style="position:absolute;left:753.00px;top:275.49px;font-size:11px;line-height:11px;color:#262626;white-space:nowrap;letter-spacing:0.25px;">IQ</div>
<div style="position:absolute;left:749px;top:413px;width:285px;height:128px;box-sizing:border-box;border:1px solid #8c8c8c;border-radius:4px;"></div><div style="position:absolute;left:750px;top:414px;width:283px;height:126px;box-sizing:border-box;border:1px solid #e2e2e2;border-right:none;border-bottom:none;border-radius:3px;"></div><div style="position:absolute;left:753px;top:411px;width:74px;height:5px;background:#d8d8d8"></div><div style="position:absolute;left:753.00px;top:408.89px;font-size:11px;line-height:11px;color:#262626;white-space:nowrap;letter-spacing:0.25px;">IQ Averaging</div>
<div style="position:absolute;left:753.60px;top:112.99px;font-size:11px;line-height:11px;color:#262626;white-space:nowrap;letter-spacing:0.25px;">Frequency:</div>
<div style="position:absolute;left:855px;top:107px;width:96px;height:20px;box-sizing:border-box;border:1px solid #707070;border-radius:3px;background:linear-gradient(#f4f4f4,#e8e8e8)"></div><div style="position:absolute;left:859.00px;top:112.39px;font-size:11px;line-height:11px;color:#1a1a1a;white-space:nowrap;letter-spacing:0.25px;">1 GHz</div>
<div style="position:absolute;left:952px;top:105px;width:19px;height:11px;box-sizing:border-box;border:1px solid #7a7a7a;border-radius:3px;background:linear-gradient(#f2f2f2,#c6c6c6);display:flex;align-items:center;justify-content:center"><svg width="9" height="7" viewBox="0 0 9 7"><path d="M1 6.6 L4.5 0.5 L8 6.6 L4.5 4.4 Z" fill="#151515"/></svg></div><div style="position:absolute;left:952px;top:117px;width:19px;height:11px;box-sizing:border-box;border:1px solid #7a7a7a;border-radius:3px;background:linear-gradient(#f2f2f2,#c6c6c6);display:flex;align-items:center;justify-content:center"><svg width="9" height="7" viewBox="0 0 9 7"><path d="M1 0.4 L4.5 6.5 L8 0.4 L4.5 2.6 Z" fill="#151515"/></svg></div>
<div style="position:absolute;left:753.60px;top:148.59px;font-size:11px;line-height:11px;color:#262626;white-space:nowrap;letter-spacing:0.25px;">Input Power:</div>
<div style="position:absolute;left:855px;top:143px;width:96px;height:20px;box-sizing:border-box;border:1px solid #707070;border-radius:3px;background:linear-gradient(#f4f4f4,#e8e8e8)"></div><div style="position:absolute;left:859.00px;top:148.39px;font-size:11px;line-height:11px;color:#1a1a1a;white-space:nowrap;letter-spacing:0.25px;">10 dBm</div>
<div style="position:absolute;left:952px;top:141px;width:19px;height:11px;box-sizing:border-box;border:1px solid #7a7a7a;border-radius:3px;background:linear-gradient(#f2f2f2,#c6c6c6);display:flex;align-items:center;justify-content:center"><svg width="9" height="7" viewBox="0 0 9 7"><path d="M1 6.6 L4.5 0.5 L8 6.6 L4.5 4.4 Z" fill="#151515"/></svg></div><div style="position:absolute;left:952px;top:153px;width:19px;height:11px;box-sizing:border-box;border:1px solid #7a7a7a;border-radius:3px;background:linear-gradient(#f2f2f2,#c6c6c6);display:flex;align-items:center;justify-content:center"><svg width="9" height="7" viewBox="0 0 9 7"><path d="M1 0.4 L4.5 6.5 L8 0.4 L4.5 2.6 Z" fill="#151515"/></svg></div>
<div style="position:absolute;left:753.60px;top:182.09px;font-size:11px;line-height:11px;color:#262626;white-space:nowrap;letter-spacing:0.25px;">Conversion:</div>
<div style="position:absolute;left:853px;top:177px;width:120px;height:20px;box-sizing:border-box;border:1px solid #808080;border-radius:3px;background:linear-gradient(#f7f7f7,#e9e9e9);overflow:hidden"><div style="position:absolute;right:0;top:0;width:21px;height:18px;box-sizing:border-box;border:1px solid #5e5e5e;border-radius:3px;background:linear-gradient(#f0f0f0,#bdbdbd);display:flex;align-items:center;justify-content:center"><svg width="12" height="10" viewBox="0 0 12 10" style="flex:none"><path d="M0.6 0.8 L6 9.6 L11.4 0.8 L6 3.8 Z" fill="#0c0c0c"/></svg></div></div><div style="position:absolute;left:856.00px;top:182.39px;font-size:11px;line-height:11px;color:#1a1a1a;white-space:nowrap;letter-spacing:0.25px;">Auto</div>
<div style="position:absolute;left:753.60px;top:211.19px;font-size:11px;line-height:11px;color:#262626;white-space:nowrap;letter-spacing:0.25px;">Actual Conversion: Single High Side</div>
<div style="position:absolute;left:753.60px;top:240.19px;font-size:11px;line-height:11px;color:#262626;white-space:nowrap;letter-spacing:0.25px;">IF Bandwidth:</div>
<div style="position:absolute;left:853px;top:235px;width:120px;height:20px;box-sizing:border-box;border:1px solid #808080;border-radius:3px;background:linear-gradient(#f7f7f7,#e9e9e9);overflow:hidden"><div style="position:absolute;right:0;top:0;width:21px;height:18px;box-sizing:border-box;border:1px solid #5e5e5e;border-radius:3px;background:linear-gradient(#f0f0f0,#bdbdbd);display:flex;align-items:center;justify-content:center"><svg width="12" height="10" viewBox="0 0 12 10" style="flex:none"><path d="M0.6 0.8 L6 9.6 L11.4 0.8 L6 3.8 Z" fill="#0c0c0c"/></svg></div></div><div style="position:absolute;left:856.00px;top:240.39px;font-size:11px;line-height:11px;color:#1a1a1a;white-space:nowrap;letter-spacing:0.25px;">160 MHz Filter</div>
<div style="position:absolute;left:753.60px;top:309.59px;font-size:11px;line-height:11px;color:#262626;white-space:nowrap;letter-spacing:0.25px;">Sample Rate:</div>
<div style="position:absolute;left:854px;top:304px;width:96px;height:20px;box-sizing:border-box;border:1px solid #707070;border-radius:3px;background:linear-gradient(#f4f4f4,#e8e8e8)"></div><div style="position:absolute;left:858.00px;top:309.39px;font-size:11px;line-height:11px;color:#1a1a1a;white-space:nowrap;letter-spacing:0.25px;">50 MHz</div>
<div style="position:absolute;left:952px;top:302px;width:19px;height:11px;box-sizing:border-box;border:1px solid #7a7a7a;border-radius:3px;background:linear-gradient(#f2f2f2,#c6c6c6);display:flex;align-items:center;justify-content:center"><svg width="9" height="7" viewBox="0 0 9 7"><path d="M1 6.6 L4.5 0.5 L8 6.6 L4.5 4.4 Z" fill="#151515"/></svg></div><div style="position:absolute;left:952px;top:314px;width:19px;height:11px;box-sizing:border-box;border:1px solid #7a7a7a;border-radius:3px;background:linear-gradient(#f2f2f2,#c6c6c6);display:flex;align-items:center;justify-content:center"><svg width="9" height="7" viewBox="0 0 9 7"><path d="M1 0.4 L4.5 6.5 L8 0.4 L4.5 2.6 Z" fill="#151515"/></svg></div>
<div style="position:absolute;left:753.60px;top:345.19px;font-size:11px;line-height:11px;color:#262626;white-space:nowrap;letter-spacing:0.25px;">Samples:</div>
<div style="position:absolute;left:854px;top:340px;width:96px;height:20px;box-sizing:border-box;border:1px solid #707070;border-radius:3px;background:linear-gradient(#f4f4f4,#e8e8e8)"></div><div style="position:absolute;left:858.00px;top:345.39px;font-size:11px;line-height:11px;color:#1a1a1a;white-space:nowrap;letter-spacing:0.25px;">50000</div>
<div style="position:absolute;left:952px;top:338px;width:19px;height:11px;box-sizing:border-box;border:1px solid #7a7a7a;border-radius:3px;background:linear-gradient(#f2f2f2,#c6c6c6);display:flex;align-items:center;justify-content:center"><svg width="9" height="7" viewBox="0 0 9 7"><path d="M1 6.6 L4.5 0.5 L8 6.6 L4.5 4.4 Z" fill="#151515"/></svg></div><div style="position:absolute;left:952px;top:350px;width:19px;height:11px;box-sizing:border-box;border:1px solid #7a7a7a;border-radius:3px;background:linear-gradient(#f2f2f2,#c6c6c6);display:flex;align-items:center;justify-content:center"><svg width="9" height="7" viewBox="0 0 9 7"><path d="M1 0.4 L4.5 6.5 L8 0.4 L4.5 2.6 Z" fill="#151515"/></svg></div>
<div style="position:absolute;left:753.60px;top:376.19px;font-size:11px;line-height:11px;color:#262626;white-space:nowrap;letter-spacing:0.25px;">Time Span:</div>
<div style="position:absolute;left:852px;top:373px;width:120px;height:15px;box-sizing:border-box;border:1px solid #dedede;border-radius:2px;background:#e6e6e6"></div><div style="position:absolute;left:856.00px;top:375.89px;font-size:11px;line-height:11px;color:#9a9a9a;white-space:nowrap;letter-spacing:0.25px;">1000.0 us</div>
<div style="position:absolute;left:753.60px;top:439.99px;font-size:11px;line-height:11px;color:#262626;white-space:nowrap;letter-spacing:0.25px;">Type:</div>
<div style="position:absolute;left:852px;top:434px;width:120px;height:21px;box-sizing:border-box;border:1px solid #808080;border-radius:3px;background:linear-gradient(#f7f7f7,#e9e9e9);overflow:hidden"><div style="position:absolute;right:0;top:0;width:21px;height:19px;box-sizing:border-box;border:1px solid #5e5e5e;border-radius:3px;background:linear-gradient(#cfcfcf,#9c9c9c);display:flex;align-items:center;justify-content:center"><svg width="12" height="10" viewBox="0 0 12 10" style="flex:none"><path d="M0.6 0.8 L6 9.6 L11.4 0.8 L6 3.8 Z" fill="#0c0c0c"/></svg></div></div><div style="position:absolute;left:855.00px;top:439.89px;font-size:11px;line-height:11px;color:#1a1a1a;white-space:nowrap;letter-spacing:0.25px;">Off</div>
<div style="position:absolute;left:753.60px;top:473.39px;font-size:11px;line-height:11px;color:#262626;white-space:nowrap;letter-spacing:0.25px;">Count:</div>
<div style="position:absolute;left:855px;top:469px;width:95px;height:19px;box-sizing:border-box;border:1px solid #dedede;border-radius:2px;background:#e6e6e6"></div><div style="position:absolute;left:859.00px;top:473.89px;font-size:11px;line-height:11px;color:#9a9a9a;white-space:nowrap;letter-spacing:0.25px;">10</div>
<div style="position:absolute;left:952px;top:467px;width:19px;height:11px;box-sizing:border-box;border:1px solid #dcdcdc;border-radius:2px;background:#ececec;display:flex;align-items:center;justify-content:center"><svg width="9" height="7" viewBox="0 0 9 7"><path d="M1 6.6 L4.5 0.5 L8 6.6 L4.5 4.4 Z" fill="#151515"/></svg></div><div style="position:absolute;left:952px;top:479px;width:19px;height:11px;box-sizing:border-box;border:1px solid #dcdcdc;border-radius:2px;background:#ececec;display:flex;align-items:center;justify-content:center"><svg width="9" height="7" viewBox="0 0 9 7"><path d="M1 0.4 L4.5 6.5 L8 0.4 L4.5 2.6 Z" fill="#151515"/></svg></div>
<div style="position:absolute;left:753.60px;top:509.69px;font-size:11px;line-height:11px;color:#262626;white-space:nowrap;letter-spacing:0.25px;">Period:</div>
<div style="position:absolute;left:855px;top:505px;width:95px;height:19px;box-sizing:border-box;border:1px solid #dedede;border-radius:2px;background:#e6e6e6"></div><div style="position:absolute;left:859.00px;top:509.89px;font-size:11px;line-height:11px;color:#9a9a9a;white-space:nowrap;letter-spacing:0.25px;">20000</div>
<div style="position:absolute;left:952px;top:503px;width:19px;height:11px;box-sizing:border-box;border:1px solid #dcdcdc;border-radius:2px;background:#ececec;display:flex;align-items:center;justify-content:center"><svg width="9" height="7" viewBox="0 0 9 7"><path d="M1 6.6 L4.5 0.5 L8 6.6 L4.5 4.4 Z" fill="#151515"/></svg></div><div style="position:absolute;left:952px;top:515px;width:19px;height:11px;box-sizing:border-box;border:1px solid #dcdcdc;border-radius:2px;background:#ececec;display:flex;align-items:center;justify-content:center"><svg width="9" height="7" viewBox="0 0 9 7"><path d="M1 0.4 L4.5 6.5 L8 0.4 L4.5 2.6 Z" fill="#151515"/></svg></div>
</div></body></html>
